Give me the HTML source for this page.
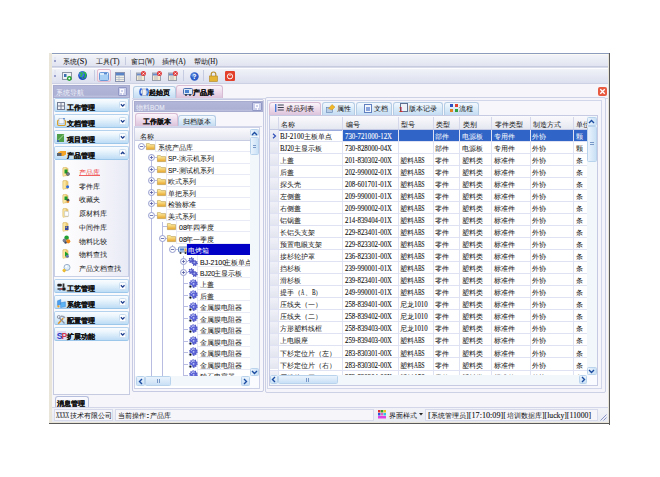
<!DOCTYPE html>
<html><head><meta charset="utf-8">
<style>
*{margin:0;padding:0;box-sizing:border-box}
html,body{width:660px;height:477px;overflow:hidden;background:#fff}
body{position:relative;font-family:"Liberation Sans",sans-serif;font-size:9.7px;color:#111;line-height:1}
.a{position:absolute}
.t{position:absolute;white-space:nowrap;font-size:9.7px;line-height:10px;color:#111}
.t b,.t i{font-weight:inherit;font-style:normal}
.c{position:relative;left:-0.7px;font-size:9.7px;letter-spacing:-1.17px;-webkit-text-stroke:0px currentColor}
.t[style*=bold] .c{-webkit-text-stroke:0.28px currentColor}
.l{display:inline-block;font-family:"Liberation Serif",serif;font-size:8.0px;white-space:nowrap}
.l>i{display:inline-block;transform-origin:0 0;-webkit-text-stroke:0.1px currentColor}
svg{overflow:visible}
body.cjk .c{font-size:6.83px;letter-spacing:0;-webkit-text-stroke:0;left:0}
body.cjk .t[style*=bold] .c{-webkit-text-stroke:0.15px currentColor}
</style></head><body>
<div class="a" style="left:49px;top:53px;width:3px;height:371px;background:#e9e5d8"></div>
<div class="a" style="left:52px;top:53px;width:557px;height:370px;background:#f6f6fa"></div>
<div class="a" style="left:52px;top:53px;width:557px;height:1px;background:#8c9cbc"></div>
<div class="a" style="left:52px;top:54px;width:556px;height:1px;background:#fbfbf4"></div>
<div class="a" style="left:608px;top:54px;width:1px;height:369px;background:#e9e5d8"></div>
<div class="a" style="left:609px;top:53px;width:1px;height:372px;background:#5a5a5a"></div>
<div class="a" style="left:52px;top:422px;width:557px;height:1px;background:#e9e5d8"></div>
<div class="a" style="left:49px;top:423px;width:561px;height:1px;background:#5a5a5a"></div>
<div class="a" style="left:52px;top:55px;width:556px;height:11px;background:linear-gradient(#f2f3f9,#e1e4f0)"></div>
<div class="a" style="left:52px;top:66px;width:556px;height:1px;background:#c6cbe0"></div>
<div class="a" style="left:54px;top:57px;width:2px;height:8px;background:#e4e6f2"></div>
<div class="a" style="left:54px;top:59.5px;width:2px;height:2px;background:#9aa2cc"></div>
<div class="t" style="left:63.3px;top:56.34px;"><b class="c">系统</b><i class="l" style="width:10.23px;"><i style="transform:scaleX(1.023)">(S)</i></i></div>
<div class="t" style="left:95.8px;top:56.34px;"><b class="c">工具</b><i class="l" style="width:10.23px;"><i style="transform:scaleX(0.930)">(T)</i></i></div>
<div class="t" style="left:131.4px;top:56.34px;"><b class="c">窗口</b><i class="l" style="width:10.23px;"><i style="transform:scaleX(0.731)">(W)</i></i></div>
<div class="t" style="left:162.4px;top:56.34px;"><b class="c">插件</b><i class="l" style="width:10.23px;"><i style="transform:scaleX(0.853)">(A)</i></i></div>
<div class="t" style="left:194.2px;top:56.34px;"><b class="c">帮助</b><i class="l" style="width:10.23px;"><i style="transform:scaleX(0.853)">(H)</i></i></div>
<div class="a" style="left:125px;top:56.5px;width:1px;height:8px;background:#c4cae0"></div>
<div class="a" style="left:52px;top:67px;width:556px;height:16px;background:linear-gradient(#f4f5fa,#dcdfee)"></div>
<div class="a" style="left:52px;top:67px;width:556px;height:1px;background:#d6dae9"></div>
<div class="a" style="left:52px;top:68px;width:556px;height:1px;background:#fdfdff"></div>
<div class="a" style="left:52px;top:83px;width:556px;height:1px;background:#cdd1e4"></div>
<div class="a" style="left:54px;top:70px;width:2px;height:11px;background:#e4e6f2"></div>
<div class="a" style="left:54px;top:75px;width:2px;height:2px;background:#9aa2cc"></div>
<div class="a" style="left:93.5px;top:70px;width:1px;height:11px;background:#c6cce2"></div>
<div class="a" style="left:130px;top:70px;width:1px;height:11px;background:#c6cce2"></div>
<div class="a" style="left:182.5px;top:70px;width:1px;height:11px;background:#c6cce2"></div>
<div class="a" style="left:203px;top:70px;width:1px;height:11px;background:#c6cce2"></div>
<div class="a" style="left:96.5px;top:69px;width:14.5px;height:13px;background:linear-gradient(#fdf5f9,#f2dfe9);border:1px solid #e4bcd0;border-radius:2px"></div>

<svg class="a" style="left:62px;top:72px" width="10" height="9" viewBox="0 0 10 9"><rect x="0.5" y="0.5" width="9" height="7" fill="#eef2f6" stroke="#8a94a4"/><rect x="2" y="2" width="2.5" height="3" fill="#3a70b0"/><circle cx="7.3" cy="6.5" r="2.4" fill="#24a030"/><circle cx="7.3" cy="6.5" r="1" fill="#fff"/></svg>
<svg class="a" style="left:78.3px;top:71.3px" width="9.2" height="9.2" viewBox="0 0 9.2 9.2"><circle cx="4.6" cy="4.6" r="4.4" fill="#1c4cc0"/><circle cx="3.6" cy="3.4" r="2.8" fill="#3a7ae0"/><path d="M1.6 2.4c1.2-.8 2.6-.6 2.4.8-.2 1.2-1.6 1.2-1.2 2.6M5.4 1.2c1.4.2 2.6 1.2 2.4 2.8-.2 1.2-1.2 1.6-.8 3" stroke="#30c040" stroke-width="1.4" fill="none"/><path d="M3.8 6.6l1.6.9" stroke="#40d050" stroke-width="1"/></svg>
<svg class="a" style="left:99px;top:71.5px" width="10" height="9" viewBox="0 0 10 9"><rect x="0.5" y="0.5" width="9" height="8" rx="1" fill="#a8d0f4" stroke="#6a9ad8"/><rect x="1" y="1" width="8" height="2" fill="#d8ecfc"/><rect x="5" y="1" width="3" height="1.5" fill="#5a8ad0"/></svg>
<svg class="a" style="left:115px;top:71.5px" width="10" height="10" viewBox="0 0 10 10"><rect x="0.5" y="0.5" width="9" height="9" fill="#f2f0e4" stroke="#8a94b0"/><rect x="1" y="1" width="8" height="2.5" fill="#5a84c8"/><path d="M1 5.5h8M1 7.5h8M4 4v5" stroke="#b4bccc" stroke-width="0.8"/></svg>

<svg class="a" style="left:135.5px;top:71px" width="10" height="10" viewBox="0 0 10 10"><rect x="0.5" y="2" width="8" height="7.5" fill="#f2ead2" stroke="#9aa0ac"/><rect x="1" y="2.5" width="7" height="2" fill="#6a8ccc"/><path d="M2 6h4M2 8h4" stroke="#a8aebb" stroke-width="0.8"/><circle cx="7.4" cy="2.6" r="2.5" fill="#e03a3a"/><path d="M6.4 1.6l2 2M8.4 1.6l-2 2" stroke="#fff" stroke-width="0.8"/></svg>
<svg class="a" style="left:152px;top:71px" width="10" height="10" viewBox="0 0 10 10"><rect x="0.5" y="2" width="8" height="7.5" fill="#f2ead2" stroke="#9aa0ac"/><rect x="1" y="2.5" width="7" height="2" fill="#6a8ccc"/><path d="M2 6h4M2 8h4" stroke="#a8aebb" stroke-width="0.8"/><circle cx="7.4" cy="2.6" r="2.5" fill="#e03a3a"/><path d="M6.4 1.6l2 2M8.4 1.6l-2 2" stroke="#fff" stroke-width="0.8"/></svg>
<svg class="a" style="left:168px;top:71px" width="10" height="10" viewBox="0 0 10 10"><rect x="0.5" y="2" width="8" height="7.5" fill="#f2ead2" stroke="#9aa0ac"/><rect x="1" y="2.5" width="7" height="2" fill="#6a8ccc"/><path d="M2 6h4M2 8h4" stroke="#a8aebb" stroke-width="0.8"/><circle cx="7.4" cy="2.6" r="2.5" fill="#e03a3a"/><path d="M6.4 1.6l2 2M8.4 1.6l-2 2" stroke="#fff" stroke-width="0.8"/></svg>

<svg class="a" style="left:189.5px;top:71.5px" width="9" height="9" viewBox="0 0 9 9"><circle cx="4.5" cy="4.5" r="4.2" fill="#2c5cc8"/><circle cx="3.6" cy="3.2" r="2.3" fill="#7aa6ec" opacity=".6"/><text x="4.5" y="7.4" font-size="7" font-family="Liberation Sans" font-weight="bold" fill="#fff" text-anchor="middle">?</text></svg>
<svg class="a" style="left:209px;top:70.5px" width="9" height="11" viewBox="0 0 9 11"><path d="M2.2 5V3.3a2.3 2.3 0 0 1 4.6 0V5" stroke="#b89030" stroke-width="1.2" fill="none"/><rect x=".5" y="5" width="8" height="5.5" fill="#e4b432" stroke="#b08424" stroke-width="0.6"/></svg>
<svg class="a" style="left:225px;top:71px" width="10" height="10" viewBox="0 0 10 10"><rect x="0" y="0" width="10" height="10" rx="1.2" fill="#e2402a"/><circle cx="5" cy="5.3" r="2.6" stroke="#fff" stroke-width="1" fill="none"/><path d="M5 1.5v3.5" stroke="#e2402a" stroke-width="1.8"/><path d="M5 2v3" stroke="#fff" stroke-width="0.9"/></svg>

<div class="a" style="left:133px;top:85.5px;width:42.5px;height:12.5px;background:linear-gradient(#f4f9fe,#dcecf9 45%,#c4dcf2);border:1px solid #b4cce4;border-bottom:none;border-radius:3px 3px 0 0"></div>
<div class="a" style="left:175.5px;top:84.5px;width:47px;height:13.5px;background:linear-gradient(#fbf6fb,#eedcec 45%,#dcc4dc);border:1px solid #d8bcd4;border-bottom:none;border-radius:3px 3px 0 0"></div>
<svg class="a" style="left:139px;top:87px" width="10" height="10" viewBox="0 0 10 10"><rect x="3.2" y="2" width="4" height="6.5" fill="#eef0f4" stroke="#8088a0" stroke-width=".5"/><path d="M2.6 1.5C.6 3 .4 6 2 8" stroke="#3a6ad8" stroke-width="1.6" fill="none"/><path d="M.6 7l1.8 2.2L3.4 6.6z" fill="#2a50c0"/><path d="M7.6 8.5c2-1.5 2.2-4.5.6-6.5" stroke="#3a7ae8" stroke-width="1.6" fill="none"/><path d="M9.6 3L7.8.8 6.8 3.4z" fill="#2a60d0"/></svg>
<div class="t" style="left:149.2px;top:86.94px;font-weight:bold"><b class="c">起始页</b></div>
<svg class="a" style="left:183px;top:88px" width="10" height="8" viewBox="0 0 10 8"><rect x="0.5" y="0.5" width="9" height="6" rx="1" fill="#dce8f4" stroke="#4a70b0"/><rect x="2" y="2" width="4" height="3" fill="#4a80d0"/><circle cx="3" cy="7" r="1" fill="#333"/><circle cx="7" cy="7" r="1" fill="#333"/></svg>
<div class="t" style="left:192.5px;top:86.94px;font-weight:bold"><b class="c">产品库</b></div>
<svg class="a" style="left:598px;top:86.5px" width="9" height="9" viewBox="0 0 9 9"><rect x="0" y="0" width="9" height="9" rx="2" fill="#e85a40"/><path d="M2.3 2.3l4.4 4.4M6.7 2.3l-4.4 4.4" stroke="#fff" stroke-width="1.3"/></svg>
<div class="a" style="left:132px;top:98px;width:476px;height:1px;background:#d6d9ea"></div>
<div class="a" style="left:53px;top:84.5px;width:76.5px;height:310px;background:#fafafd;border:1px solid #c6cbe2"></div>
<div class="a" style="left:53px;top:84.5px;width:76.5px;height:13px;background:linear-gradient(#b2b6d8,#acb0d3 80%,#c0c4e0);border:1px solid #a8adcf"></div>
<div class="t" style="left:55.9px;top:87.24px;color:#f0f1fa"><b class="c">系统导航</b></div>
<div class="a" style="left:117.6px;top:87.3px;width:9.4px;height:9px;background:#ccd0ea;border:1px solid #9298c6;border-radius:1px"></div>
<div class="a" style="left:120.2px;top:89.3px;width:4.2px;height:4px;border:1px solid #fafaff"></div>
<div class="a" style="left:121.8px;top:93px;width:1px;height:2px;background:#fafaff"></div>
<div class="a" style="left:53.5px;top:98.3px;width:75.5px;height:13.3px;background:linear-gradient(#f9fcff 0%,#edf6fd 30%,#d2e8f9 70%,#bddcf5 100%);border:1px solid #b4d2ee;border-bottom-color:#9cc6ea;border-radius:2px"></div>
<svg class="a" style="left:56.5px;top:101.5px" width="8" height="8" viewBox="0 0 8 8"><rect x=".5" y=".5" width="7" height="7" fill="#eef0f4" stroke="#747e94"/><path d="M4 .5v7M.5 4h7" stroke="#747e94"/></svg>
<div class="t" style="left:67px;top:101.54px;font-weight:bold"><b class="c">工作管理</b></div>
<svg class="a" style="left:118.6px;top:101.2px" width="7.4" height="8.2" viewBox="0 0 7.4 8.2"><rect x=".5" y=".5" width="6.4" height="7.2" rx="1.2" fill="#fbfdff" stroke="#c8dcf0"/><path d="M1.9 3.3l1.8 1.8 1.8-1.8" stroke="#1a3c8c" stroke-width="1.3" fill="none"/></svg>
<div class="a" style="left:53.5px;top:114.3px;width:75.5px;height:13.3px;background:linear-gradient(#f9fcff 0%,#edf6fd 30%,#d2e8f9 70%,#bddcf5 100%);border:1px solid #b4d2ee;border-bottom-color:#9cc6ea;border-radius:2px"></div>
<svg class="a" style="left:56.5px;top:117.5px" width="9" height="8" viewBox="0 0 9 8"><rect x=".6" y="2" width="7.8" height="5.5" rx="1.2" fill="none" stroke="#d8a028" stroke-width="1.2"/><rect x="2" y=".3" width="5" height="5.5" fill="#f4f8fc" stroke="#98a8c4" stroke-width=".5"/><circle cx="7" cy=".8" r=".8" fill="#3070d0"/></svg>
<div class="t" style="left:67px;top:117.54px;font-weight:bold"><b class="c">文档管理</b></div>
<svg class="a" style="left:118.6px;top:117.2px" width="7.4" height="8.2" viewBox="0 0 7.4 8.2"><rect x=".5" y=".5" width="6.4" height="7.2" rx="1.2" fill="#fbfdff" stroke="#c8dcf0"/><path d="M1.9 3.3l1.8 1.8 1.8-1.8" stroke="#1a3c8c" stroke-width="1.3" fill="none"/></svg>
<div class="a" style="left:53.5px;top:130.3px;width:75.5px;height:13.3px;background:linear-gradient(#f9fcff 0%,#edf6fd 30%,#d2e8f9 70%,#bddcf5 100%);border:1px solid #b4d2ee;border-bottom-color:#9cc6ea;border-radius:2px"></div>
<svg class="a" style="left:56.5px;top:133.5px" width="8" height="8" viewBox="0 0 8 8"><rect x="0" y="0" width="7" height="8" fill="#4e9e4a"/><path d="M0 7.5l7-7" stroke="#a8d898" stroke-width="1"/><circle cx="1" cy="7" r="1" fill="#3050c0"/></svg>
<div class="t" style="left:67px;top:133.54px;font-weight:bold"><b class="c">项目管理</b></div>
<svg class="a" style="left:118.6px;top:133.2px" width="7.4" height="8.2" viewBox="0 0 7.4 8.2"><rect x=".5" y=".5" width="6.4" height="7.2" rx="1.2" fill="#fbfdff" stroke="#c8dcf0"/><path d="M1.9 3.3l1.8 1.8 1.8-1.8" stroke="#1a3c8c" stroke-width="1.3" fill="none"/></svg>
<div class="a" style="left:53.5px;top:146.3px;width:75.5px;height:13.3px;background:linear-gradient(#f9fcff 0%,#edf6fd 30%,#d2e8f9 70%,#bddcf5 100%);border:1px solid #b4d2ee;border-bottom-color:#9cc6ea;border-radius:2px"></div>
<svg class="a" style="left:56.5px;top:149.5px" width="9" height="7" viewBox="0 0 9 7"><path d="M1 2.5l2.5-1.5h5.5v3.5l-2.5 1.5H1z" fill="#f4a428"/><rect x="0" y="3" width="4.5" height="3" fill="#5a6270"/></svg>
<div class="t" style="left:67px;top:149.54px;font-weight:bold"><b class="c">产品管理</b></div>
<svg class="a" style="left:118.6px;top:149.2px" width="7.4" height="8.2" viewBox="0 0 7.4 8.2"><rect x=".5" y=".5" width="6.4" height="7.2" rx="1.2" fill="#fbfdff" stroke="#c8dcf0"/><path d="M1.9 5l1.8-1.8L5.5 5" stroke="#1a3c8c" stroke-width="1.3" fill="none"/></svg>
<div class="a" style="left:53.5px;top:160px;width:75.5px;height:117px;background:linear-gradient(90deg,#ffffff,#f6f6fb 55%,#e8eaf5);border:1px solid #c8d0e8;border-top:none"></div>
<svg class="a" style="left:62px;top:166.7px" width="9" height="10" viewBox="0 0 9 10"><path d="M1 .8h4.2l.8 1v6.8H1z" fill="#f2d27a" stroke="#c9a24a" stroke-width=".5"/><path d="M1 1.2l3-.9v8.2l-3 .9z" fill="#fbe7a0" stroke="#d8b560" stroke-width=".4"/><rect x="2.5" y="2.5" width="3" height="4" fill="#1e9a2a"/><circle cx="6" cy="7" r="1.8" fill="#404858"/><circle cx="6" cy="7" r=".7" fill="#c8ccd8"/></svg>
<div class="t" style="left:79px;top:167.04px;color:#f03838"><b class="c">产品库</b></div>
<div class="a" style="left:79px;top:174.9px;width:20.5px;height:0.8px;background:#f06060"></div>
<svg class="a" style="left:62px;top:180.4px" width="9" height="10" viewBox="0 0 9 10"><path d="M1 .8h4.2l.8 1v6.8H1z" fill="#f2d27a" stroke="#c9a24a" stroke-width=".5"/><path d="M1 1.2l3-.9v8.2l-3 .9z" fill="#fbe7a0" stroke="#d8b560" stroke-width=".4"/><circle cx="5.6" cy="6.8" r="1.5" fill="#2a6ae0"/></svg>
<div class="t" style="left:79px;top:180.74px;"><b class="c">零件库</b></div>
<svg class="a" style="left:62px;top:194.1px" width="9" height="10" viewBox="0 0 9 10"><path d="M1 .8h4.2l.8 1v6.8H1z" fill="#f2d27a" stroke="#c9a24a" stroke-width=".5"/><path d="M1 1.2l3-.9v8.2l-3 .9z" fill="#fbe7a0" stroke="#d8b560" stroke-width=".4"/><rect x="2.5" y="2.5" width="3" height="3.5" fill="#1e9a2a"/><circle cx="6" cy="6.2" r="1.4" fill="#404858"/><path d="M4.6 7.2l1 .3.5-1 .5 1 1-.2-.7.8.3 1-1-.5-1 .5.3-1z" fill="#f07a10"/></svg>
<div class="t" style="left:79px;top:194.44px;"><b class="c">收藏夹</b></div>
<svg class="a" style="left:62px;top:207.8px" width="9" height="10" viewBox="0 0 9 10"><path d="M1 .8h4.2l.8 1v6.8H1z" fill="#f2d27a" stroke="#c9a24a" stroke-width=".5"/><path d="M1 1.2l3-.9v8.2l-3 .9z" fill="#fbe7a0" stroke="#d8b560" stroke-width=".4"/><path d="M2.6 3.2h3l1 1v4h-4z" fill="#fdfdfd" stroke="#a0a8b8" stroke-width=".4"/></svg>
<div class="t" style="left:79px;top:208.14px;"><b class="c">原材料库</b></div>
<svg class="a" style="left:62px;top:221.5px" width="9" height="10" viewBox="0 0 9 10"><path d="M1 .8h4.2l.8 1v6.8H1z" fill="#f2d27a" stroke="#c9a24a" stroke-width=".5"/><path d="M1 1.2l3-.9v8.2l-3 .9z" fill="#fbe7a0" stroke="#d8b560" stroke-width=".4"/><rect x="3" y="4" width="3.5" height="4" fill="#3848a0"/><rect x="3.6" y="4.6" width="1.2" height="1.2" fill="#f0d040"/></svg>
<div class="t" style="left:79px;top:221.84px;"><b class="c">中间件库</b></div>
<svg class="a" style="left:62px;top:235.2px" width="9" height="10" viewBox="0 0 9 10"><circle cx="4.6" cy="2.8" r="2.3" fill="#20a030"/><circle cx="2.6" cy="5.6" r="2" fill="#7a8090"/><circle cx="6.2" cy="6.3" r="2.1" fill="#f08a18"/><circle cx="3.6" cy="7.6" r="1.2" fill="#404a60"/></svg>
<div class="t" style="left:79px;top:235.54px;"><b class="c">物料比较</b></div>
<svg class="a" style="left:62px;top:248.9px" width="9" height="10" viewBox="0 0 9 10"><path d="M1 .8h4.2l.8 1v6.8H1z" fill="#f2d27a" stroke="#c9a24a" stroke-width=".5"/><path d="M1 1.2l3-.9v8.2l-3 .9z" fill="#fbe7a0" stroke="#d8b560" stroke-width=".4"/><path d="M3 2.6l3.8 2.6L3 7.8z" fill="#18a028"/><circle cx="5.4" cy="7.3" r="1.5" fill="#6078b0"/></svg>
<div class="t" style="left:79px;top:249.24px;"><b class="c">物料查找</b></div>
<svg class="a" style="left:62px;top:262.6px" width="9" height="10" viewBox="0 0 9 10"><path d="M1.5 8.8l2.5-2.5" stroke="#d8a030" stroke-width="2"/><circle cx="5" cy="4.4" r="3" fill="#dff0fb" stroke="#9ab0c8" stroke-width="1"/><circle cx="4.2" cy="3.6" r="1" fill="#fff"/><circle cx="2" cy="7.2" r="1.5" fill="#f0c030"/></svg>
<div class="t" style="left:79px;top:262.94px;"><b class="c">产品文档查找</b></div>
<div class="a" style="left:53.5px;top:279.3px;width:75.5px;height:13.3px;background:linear-gradient(#f9fcff 0%,#edf6fd 30%,#d2e8f9 70%,#bddcf5 100%);border:1px solid #b4d2ee;border-bottom-color:#9cc6ea;border-radius:2px"></div>
<svg class="a" style="left:56.5px;top:282.5px" width="9" height="8" viewBox="0 0 9 8"><rect x=".3" y=".8" width="4.5" height="2.6" rx="1" fill="#202020"/><rect x="5.6" y=".5" width="1.8" height="4" fill="#303030"/><path d="M.5 5.2h3.8l1.3 1.6H.5z" fill="#383838"/><rect x="5.2" y="4.6" width="3.4" height="3" rx=".8" fill="#181818"/><circle cx="4.4" cy="5.8" r=".9" fill="#d04040"/><circle cx="3" cy="7.2" r=".7" fill="#4a80d0"/></svg>
<div class="t" style="left:67px;top:282.54px;font-weight:bold"><b class="c">工艺管理</b></div>
<svg class="a" style="left:118.6px;top:282.2px" width="7.4" height="8.2" viewBox="0 0 7.4 8.2"><rect x=".5" y=".5" width="6.4" height="7.2" rx="1.2" fill="#fbfdff" stroke="#c8dcf0"/><path d="M1.9 3.3l1.8 1.8 1.8-1.8" stroke="#1a3c8c" stroke-width="1.3" fill="none"/></svg>
<div class="a" style="left:53.5px;top:295.3px;width:75.5px;height:13.3px;background:linear-gradient(#f9fcff 0%,#edf6fd 30%,#d2e8f9 70%,#bddcf5 100%);border:1px solid #b4d2ee;border-bottom-color:#9cc6ea;border-radius:2px"></div>
<svg class="a" style="left:56.5px;top:298.5px" width="9" height="9" viewBox="0 0 9 9"><path d="M.5 1.8L3.8.5v4.8L.5 6.6z" fill="#4aa0ee" stroke="#2a70c0" stroke-width=".4"/><path d="M3.6 3.8l4.8-1v4.8l-4.8 1z" fill="#5cb4f4" stroke="#2a70c0" stroke-width=".4"/><circle cx="1.4" cy="7.4" r="1.1" fill="#f0a020"/></svg>
<div class="t" style="left:67px;top:298.54px;font-weight:bold"><b class="c">系统管理</b></div>
<svg class="a" style="left:118.6px;top:298.2px" width="7.4" height="8.2" viewBox="0 0 7.4 8.2"><rect x=".5" y=".5" width="6.4" height="7.2" rx="1.2" fill="#fbfdff" stroke="#c8dcf0"/><path d="M1.9 3.3l1.8 1.8 1.8-1.8" stroke="#1a3c8c" stroke-width="1.3" fill="none"/></svg>
<div class="a" style="left:53.5px;top:311.3px;width:75.5px;height:13.3px;background:linear-gradient(#f9fcff 0%,#edf6fd 30%,#d2e8f9 70%,#bddcf5 100%);border:1px solid #b4d2ee;border-bottom-color:#9cc6ea;border-radius:2px"></div>
<svg class="a" style="left:56.5px;top:314.5px" width="9" height="10" viewBox="0 0 9 10"><path d="M1.2 8.8L6.2 3.2" stroke="#e09428" stroke-width="1.6"/><path d="M2 2.5L7.5 8.5" stroke="#8a90a0" stroke-width="1.2"/><path d="M3.5 .8c2-.8 4.2.2 5 2l-1.6.6C6 2.2 5 1.8 3.8 2.2z" fill="#9aa0b0"/><circle cx="1.8" cy="2" r="1.5" fill="none" stroke="#8a90a0" stroke-width=".9"/></svg>
<div class="t" style="left:67px;top:314.54px;font-weight:bold"><b class="c">配置管理</b></div>
<svg class="a" style="left:118.6px;top:314.2px" width="7.4" height="8.2" viewBox="0 0 7.4 8.2"><rect x=".5" y=".5" width="6.4" height="7.2" rx="1.2" fill="#fbfdff" stroke="#c8dcf0"/><path d="M1.9 3.3l1.8 1.8 1.8-1.8" stroke="#1a3c8c" stroke-width="1.3" fill="none"/></svg>
<div class="a" style="left:53.5px;top:327.3px;width:75.5px;height:13.3px;background:linear-gradient(#f9fcff 0%,#edf6fd 30%,#d2e8f9 70%,#bddcf5 100%);border:1px solid #b4d2ee;border-bottom-color:#9cc6ea;border-radius:2px"></div>
<svg class="a" style="left:56.5px;top:330.5px" width="9" height="9" viewBox="0 0 9 9"><rect x="0" y="0" width="9" height="9" fill="#dcdcf4"/><text x="-.2" y="8.2" font-size="8.6" font-family="Liberation Sans" font-weight="bold" fill="#2838c8">S</text><text x="4.4" y="8.2" font-size="8.6" font-family="Liberation Sans" font-weight="bold" fill="#d03850">P</text></svg>
<div class="t" style="left:67px;top:330.54px;font-weight:bold"><b class="c">扩展功能</b></div>
<svg class="a" style="left:118.6px;top:330.2px" width="7.4" height="8.2" viewBox="0 0 7.4 8.2"><rect x=".5" y=".5" width="6.4" height="7.2" rx="1.2" fill="#fbfdff" stroke="#c8dcf0"/><path d="M1.9 3.3l1.8 1.8 1.8-1.8" stroke="#1a3c8c" stroke-width="1.3" fill="none"/></svg>
<div class="a" style="left:131.5px;top:99px;width:132.5px;height:292.5px;background:#f6f6fb;border:1px solid #c6cae2;border-radius:2px"></div>
<div class="a" style="left:133.5px;top:101px;width:129px;height:11px;background:linear-gradient(#b2b6d8,#acb0d3 80%,#c0c4e0);border:1px solid #a8adcf"></div>
<div class="t" style="left:135.5px;top:101.84px;color:#eceef8"><b class="c">物料</b><i class="l" style="width:14.4px;font-family:'Liberation Sans';"><i style="transform:scaleX(0.800)">BOM</i></i></div>
<div class="a" style="left:252.3px;top:102.3px;width:9.4px;height:9px;background:#ccd0ea;border:1px solid #9298c6;border-radius:1px"></div>
<div class="a" style="left:254.9px;top:104.3px;width:4.2px;height:4px;border:1px solid #fafaff"></div>
<div class="a" style="left:256.5px;top:108px;width:1px;height:2px;background:#fafaff"></div>
<div class="a" style="left:135px;top:113.3px;width:42.5px;height:13px;background:linear-gradient(#fbf6fb,#eedcec 45%,#dcc4dc);border:1px solid #d8bcd4;border-bottom:none;border-radius:3px 3px 0 0"></div>
<div class="a" style="left:177.5px;top:114.8px;width:38.5px;height:11.5px;background:linear-gradient(#f4f9fe,#dcecf9 45%,#c4dcf2);border:1px solid #b4cce4;border-bottom:none;border-radius:3px 3px 0 0"></div>
<div class="t" style="left:142.9px;top:115.84px;font-weight:bold"><b class="c">工作版本</b></div>
<div class="t" style="left:182.5px;top:115.94px;"><b class="c">归档版本</b></div>
<div class="a" style="left:133.5px;top:126.3px;width:128px;height:1px;background:#d2d6e8"></div>
<div class="a" style="left:134.2px;top:126.5px;width:125.5px;height:262px;background:#fff;border:1px solid #cdd1e7"></div>
<div class="a" style="left:135.2px;top:127.5px;width:114.8px;height:12.5px;background:linear-gradient(#fafafd,#e4e6f0)"></div>
<div class="a" style="left:135.2px;top:139.5px;width:114.8px;height:1px;background:#c8cce2"></div>
<div class="t" style="left:139.5px;top:130.84px;"><b class="c">名称</b></div>
<div class="a" style="left:135.2px;top:140.5px;width:114.8px;height:235.5px;overflow:hidden">
<div class="a" style="left:16px;top:13.45px;width:1px;height:61.25px;background:#b8bce0"></div>
<div class="a" style="left:16px;top:77.7px;width:1px;height:181.8px;background:#b8bce0"></div>
<div class="a" style="left:26.5px;top:81.15px;width:1px;height:178.35px;background:#b8bce0"></div>
<div class="a" style="left:47.5px;top:115.5px;width:1px;height:144px;background:#b8bce0"></div>
<div class="a" style="left:37px;top:104.05px;width:1px;height:5px;background:#b8bce0"></div>
<div class="a" style="left:20px;top:0.3px;width:1px;height:11.45px;background:#e8eaf5"></div>
<div class="a" style="left:20px;top:10.75px;width:300px;height:1px;background:#e8eaf5"></div>
<div class="a" style="left:9px;top:5.5px;width:2.3px;height:1px;background:#b8bce0"></div>
<svg class="a" style="left:2.5px;top:2.5px" width="7" height="7" viewBox="0 0 7 7"><circle cx="3.5" cy="3.5" r="3" fill="#fff" stroke="#8a92c8" stroke-width=".9"/><path d="M1.8 3.5h3.4" stroke="#5058a0" stroke-width=".8"/></svg>
<svg class="a" style="left:11.3px;top:2.7px" width="9" height="7" viewBox="0 0 9 7"><defs><linearGradient id="fg" x1="0" y1="0" x2="0" y2="1"><stop offset="0" stop-color="#fff4b0"/><stop offset="1" stop-color="#e8a428"/></linearGradient></defs><path d="M.4 .6h3l.8 1h4.4v5H.4z" fill="url(#fg)" stroke="#a88838" stroke-width=".5"/></svg>
<div class="t" style="left:22.5px;top:1.54px;"><b class="c">系统产品库</b></div>
<div class="a" style="left:30.5px;top:11.75px;width:1px;height:11.45px;background:#e8eaf5"></div>
<div class="a" style="left:30.5px;top:22.2px;width:300px;height:1px;background:#e8eaf5"></div>
<div class="a" style="left:19.5px;top:16.95px;width:2.3px;height:1px;background:#b8bce0"></div>
<svg class="a" style="left:13px;top:13.95px" width="7" height="7" viewBox="0 0 7 7"><circle cx="3.5" cy="3.5" r="3" fill="#fff" stroke="#8a92c8" stroke-width=".9"/><path d="M1.8 3.5h3.4M3.5 1.8v3.4" stroke="#5058a0" stroke-width=".8"/></svg>
<svg class="a" style="left:21.8px;top:14.15px" width="9" height="7" viewBox="0 0 9 7"><defs><linearGradient id="fg" x1="0" y1="0" x2="0" y2="1"><stop offset="0" stop-color="#fff4b0"/><stop offset="1" stop-color="#e8a428"/></linearGradient></defs><path d="M.4 .6h3l.8 1h4.4v5H.4z" fill="url(#fg)" stroke="#a88838" stroke-width=".5"/></svg>
<div class="t" style="left:33px;top:12.99px;"><i class="l" style="width:10.5px;font-family:'Liberation Sans';"><i style="transform:scaleX(0.808)">SP-</i></i><b class="c">演示机系列</b></div>
<div class="a" style="left:30.5px;top:23.2px;width:1px;height:11.45px;background:#e8eaf5"></div>
<div class="a" style="left:30.5px;top:33.65px;width:300px;height:1px;background:#e8eaf5"></div>
<div class="a" style="left:19.5px;top:28.4px;width:2.3px;height:1px;background:#b8bce0"></div>
<svg class="a" style="left:13px;top:25.4px" width="7" height="7" viewBox="0 0 7 7"><circle cx="3.5" cy="3.5" r="3" fill="#fff" stroke="#8a92c8" stroke-width=".9"/><path d="M1.8 3.5h3.4M3.5 1.8v3.4" stroke="#5058a0" stroke-width=".8"/></svg>
<svg class="a" style="left:21.8px;top:25.6px" width="9" height="7" viewBox="0 0 9 7"><defs><linearGradient id="fg" x1="0" y1="0" x2="0" y2="1"><stop offset="0" stop-color="#fff4b0"/><stop offset="1" stop-color="#e8a428"/></linearGradient></defs><path d="M.4 .6h3l.8 1h4.4v5H.4z" fill="url(#fg)" stroke="#a88838" stroke-width=".5"/></svg>
<div class="t" style="left:33px;top:24.44px;"><i class="l" style="width:10.5px;font-family:'Liberation Sans';"><i style="transform:scaleX(0.808)">SP-</i></i><b class="c">测试机系列</b></div>
<div class="a" style="left:30.5px;top:34.65px;width:1px;height:11.45px;background:#e8eaf5"></div>
<div class="a" style="left:30.5px;top:45.1px;width:300px;height:1px;background:#e8eaf5"></div>
<div class="a" style="left:19.5px;top:39.85px;width:2.3px;height:1px;background:#b8bce0"></div>
<svg class="a" style="left:13px;top:36.85px" width="7" height="7" viewBox="0 0 7 7"><circle cx="3.5" cy="3.5" r="3" fill="#fff" stroke="#8a92c8" stroke-width=".9"/><path d="M1.8 3.5h3.4M3.5 1.8v3.4" stroke="#5058a0" stroke-width=".8"/></svg>
<svg class="a" style="left:21.8px;top:37.05px" width="9" height="7" viewBox="0 0 9 7"><defs><linearGradient id="fg" x1="0" y1="0" x2="0" y2="1"><stop offset="0" stop-color="#fff4b0"/><stop offset="1" stop-color="#e8a428"/></linearGradient></defs><path d="M.4 .6h3l.8 1h4.4v5H.4z" fill="url(#fg)" stroke="#a88838" stroke-width=".5"/></svg>
<div class="t" style="left:33px;top:35.89px;"><b class="c">欧式系列</b></div>
<div class="a" style="left:30.5px;top:46.1px;width:1px;height:11.45px;background:#e8eaf5"></div>
<div class="a" style="left:30.5px;top:56.55px;width:300px;height:1px;background:#e8eaf5"></div>
<div class="a" style="left:19.5px;top:51.3px;width:2.3px;height:1px;background:#b8bce0"></div>
<svg class="a" style="left:13px;top:48.3px" width="7" height="7" viewBox="0 0 7 7"><circle cx="3.5" cy="3.5" r="3" fill="#fff" stroke="#8a92c8" stroke-width=".9"/><path d="M1.8 3.5h3.4M3.5 1.8v3.4" stroke="#5058a0" stroke-width=".8"/></svg>
<svg class="a" style="left:21.8px;top:48.5px" width="9" height="7" viewBox="0 0 9 7"><defs><linearGradient id="fg" x1="0" y1="0" x2="0" y2="1"><stop offset="0" stop-color="#fff4b0"/><stop offset="1" stop-color="#e8a428"/></linearGradient></defs><path d="M.4 .6h3l.8 1h4.4v5H.4z" fill="url(#fg)" stroke="#a88838" stroke-width=".5"/></svg>
<div class="t" style="left:33px;top:47.34px;"><b class="c">单把系列</b></div>
<div class="a" style="left:30.5px;top:57.55px;width:1px;height:11.45px;background:#e8eaf5"></div>
<div class="a" style="left:30.5px;top:68px;width:300px;height:1px;background:#e8eaf5"></div>
<div class="a" style="left:19.5px;top:62.75px;width:2.3px;height:1px;background:#b8bce0"></div>
<svg class="a" style="left:13px;top:59.75px" width="7" height="7" viewBox="0 0 7 7"><circle cx="3.5" cy="3.5" r="3" fill="#fff" stroke="#8a92c8" stroke-width=".9"/><path d="M1.8 3.5h3.4M3.5 1.8v3.4" stroke="#5058a0" stroke-width=".8"/></svg>
<svg class="a" style="left:21.8px;top:59.95px" width="9" height="7" viewBox="0 0 9 7"><defs><linearGradient id="fg" x1="0" y1="0" x2="0" y2="1"><stop offset="0" stop-color="#fff4b0"/><stop offset="1" stop-color="#e8a428"/></linearGradient></defs><path d="M.4 .6h3l.8 1h4.4v5H.4z" fill="url(#fg)" stroke="#a88838" stroke-width=".5"/></svg>
<div class="t" style="left:33px;top:58.79px;"><b class="c">检验标准</b></div>
<div class="a" style="left:30.5px;top:69px;width:1px;height:11.45px;background:#e8eaf5"></div>
<div class="a" style="left:30.5px;top:79.45px;width:300px;height:1px;background:#e8eaf5"></div>
<div class="a" style="left:19.5px;top:74.2px;width:2.3px;height:1px;background:#b8bce0"></div>
<svg class="a" style="left:13px;top:71.2px" width="7" height="7" viewBox="0 0 7 7"><circle cx="3.5" cy="3.5" r="3" fill="#fff" stroke="#8a92c8" stroke-width=".9"/><path d="M1.8 3.5h3.4" stroke="#5058a0" stroke-width=".8"/></svg>
<svg class="a" style="left:21.8px;top:71.4px" width="9" height="7" viewBox="0 0 9 7"><defs><linearGradient id="fg" x1="0" y1="0" x2="0" y2="1"><stop offset="0" stop-color="#fff4b0"/><stop offset="1" stop-color="#e8a428"/></linearGradient></defs><path d="M.4 .6h3l.8 1h4.4v5H.4z" fill="url(#fg)" stroke="#a88838" stroke-width=".5"/></svg>
<div class="t" style="left:33px;top:70.24px;"><b class="c">美式系列</b></div>
<div class="a" style="left:41px;top:80.45px;width:1px;height:11.45px;background:#e8eaf5"></div>
<div class="a" style="left:41px;top:90.9px;width:300px;height:1px;background:#e8eaf5"></div>
<div class="a" style="left:27px;top:85.65px;width:5.3px;height:1px;background:#b8bce0"></div>
<svg class="a" style="left:32.3px;top:82.85px" width="9" height="7" viewBox="0 0 9 7"><defs><linearGradient id="fg" x1="0" y1="0" x2="0" y2="1"><stop offset="0" stop-color="#fff4b0"/><stop offset="1" stop-color="#e8a428"/></linearGradient></defs><path d="M.4 .6h3l.8 1h4.4v5H.4z" fill="url(#fg)" stroke="#a88838" stroke-width=".5"/></svg>
<div class="t" style="left:43.5px;top:81.69px;"><i class="l" style="width:7px;font-family:'Liberation Sans';"><i style="transform:scaleX(0.875)">08</i></i><b class="c">年四季度</b></div>
<div class="a" style="left:41px;top:91.9px;width:1px;height:11.45px;background:#e8eaf5"></div>
<div class="a" style="left:41px;top:102.35px;width:300px;height:1px;background:#e8eaf5"></div>
<div class="a" style="left:30px;top:97.1px;width:2.3px;height:1px;background:#b8bce0"></div>
<svg class="a" style="left:23.5px;top:94.1px" width="7" height="7" viewBox="0 0 7 7"><circle cx="3.5" cy="3.5" r="3" fill="#fff" stroke="#8a92c8" stroke-width=".9"/><path d="M1.8 3.5h3.4" stroke="#5058a0" stroke-width=".8"/></svg>
<svg class="a" style="left:32.3px;top:94.3px" width="9" height="7" viewBox="0 0 9 7"><defs><linearGradient id="fg" x1="0" y1="0" x2="0" y2="1"><stop offset="0" stop-color="#fff4b0"/><stop offset="1" stop-color="#e8a428"/></linearGradient></defs><path d="M.4 .6h3l.8 1h4.4v5H.4z" fill="url(#fg)" stroke="#a88838" stroke-width=".5"/></svg>
<div class="t" style="left:43.5px;top:93.14px;"><i class="l" style="width:7px;font-family:'Liberation Sans';"><i style="transform:scaleX(0.875)">08</i></i><b class="c">年一季度</b></div>
<div class="a" style="left:50.8px;top:103.35px;width:1px;height:11.45px;background:#e8eaf5"></div>
<div class="a" style="left:50.8px;top:113.8px;width:300px;height:1px;background:#e8eaf5"></div>
<div class="a" style="left:40.5px;top:108.55px;width:2.3px;height:1px;background:#b8bce0"></div>
<svg class="a" style="left:34px;top:105.55px" width="7" height="7" viewBox="0 0 7 7"><circle cx="3.5" cy="3.5" r="3" fill="#fff" stroke="#8a92c8" stroke-width=".9"/><path d="M1.8 3.5h3.4" stroke="#5058a0" stroke-width=".8"/></svg>
<svg class="a" style="left:42.8px;top:105.05px" width="10" height="8" viewBox="0 0 10 8"><rect x=".5" y="1" width="9" height="5" rx="1" fill="#d8e4f4" stroke="#4a70b0" stroke-width=".8"/><rect x="2" y="2.5" width="4" height="2" fill="#4a80d0"/><rect x="6.5" y="2.5" width="2" height="3" fill="#e0a040"/><circle cx="2.5" cy="7" r="1" fill="#333"/><circle cx="7.5" cy="7" r="1" fill="#333"/></svg>
<div class="a" style="left:51.8px;top:103.75px;width:70px;height:11px;background:#0000c6"></div>
<div class="t" style="left:53.3px;top:104.59px;color:#fff"><b class="c">电烤箱</b></div>
<div class="a" style="left:62px;top:114.8px;width:1px;height:11.45px;background:#e8eaf5"></div>
<div class="a" style="left:62px;top:125.25px;width:300px;height:1px;background:#e8eaf5"></div>
<div class="a" style="left:51px;top:120px;width:2.3px;height:1px;background:#b8bce0"></div>
<svg class="a" style="left:44.5px;top:117px" width="7" height="7" viewBox="0 0 7 7"><circle cx="3.5" cy="3.5" r="3" fill="#fff" stroke="#8a92c8" stroke-width=".9"/><path d="M1.8 3.5h3.4M3.5 1.8v3.4" stroke="#5058a0" stroke-width=".8"/></svg>
<svg class="a" style="left:53.3px;top:116.2px" width="10" height="9" viewBox="0 0 10 9"><circle cx="3.3" cy="3.2" r="2.3" fill="#5a60cc" stroke="#4a50c0" stroke-width="1.4" stroke-dasharray="1 .9"/><circle cx="6.8" cy="6" r="2.3" fill="#5a60cc" stroke="#4a50c0" stroke-width="1.4" stroke-dasharray="1 .9"/><circle cx="2.8" cy="2.6" r=".9" fill="#a8b0f0"/><circle cx="6.3" cy="5.4" r=".9" fill="#a8b0f0"/></svg>
<div class="t" style="left:64.5px;top:116.04px;"><i class="l" style="width:24.5px;font-family:'Liberation Sans';"><i style="transform:scaleX(0.875)">BJ-2100</i></i><b class="c">主板单点</b></div>
<div class="a" style="left:62px;top:126.25px;width:1px;height:11.45px;background:#e8eaf5"></div>
<div class="a" style="left:62px;top:136.7px;width:300px;height:1px;background:#e8eaf5"></div>
<div class="a" style="left:51px;top:131.45px;width:2.3px;height:1px;background:#b8bce0"></div>
<svg class="a" style="left:44.5px;top:128.45px" width="7" height="7" viewBox="0 0 7 7"><circle cx="3.5" cy="3.5" r="3" fill="#fff" stroke="#8a92c8" stroke-width=".9"/><path d="M1.8 3.5h3.4M3.5 1.8v3.4" stroke="#5058a0" stroke-width=".8"/></svg>
<svg class="a" style="left:53.3px;top:127.65px" width="10" height="9" viewBox="0 0 10 9"><circle cx="3.3" cy="3.2" r="2.3" fill="#5a60cc" stroke="#4a50c0" stroke-width="1.4" stroke-dasharray="1 .9"/><circle cx="6.8" cy="6" r="2.3" fill="#5a60cc" stroke="#4a50c0" stroke-width="1.4" stroke-dasharray="1 .9"/><circle cx="2.8" cy="2.6" r=".9" fill="#a8b0f0"/><circle cx="6.3" cy="5.4" r=".9" fill="#a8b0f0"/></svg>
<div class="t" style="left:64.5px;top:127.49px;"><i class="l" style="width:14px;font-family:'Liberation Sans';"><i style="transform:scaleX(0.824)">BJ20</i></i><b class="c">主显示板</b></div>
<div class="a" style="left:62px;top:137.7px;width:1px;height:11.45px;background:#e8eaf5"></div>
<div class="a" style="left:62px;top:148.15px;width:300px;height:1px;background:#e8eaf5"></div>
<div class="a" style="left:48px;top:142.9px;width:5.3px;height:1px;background:#b8bce0"></div>
<svg class="a" style="left:52.5px;top:138.1px" width="10" height="10" viewBox="0 0 10 10"><circle cx="5.4" cy="4.6" r="3.4" fill="#5c64d6" stroke="#4c54c8" stroke-width="1.8" stroke-dasharray="1.2 .9"/><path d="M3.4 3.6a2.2 2.2 0 0 1 3.2-1.3" stroke="#dfe4ff" stroke-width="1" fill="none"/><circle cx="5.6" cy="4.8" r=".9" fill="#c0c8f8"/><circle cx="2.4" cy="7.6" r="1.9" fill="#e0e8f0"/><circle cx="2.4" cy="7.6" r="1.1" fill="#101010"/></svg>
<div class="t" style="left:64.5px;top:138.94px;"><b class="c">上盖</b></div>
<div class="a" style="left:62px;top:149.15px;width:1px;height:11.45px;background:#e8eaf5"></div>
<div class="a" style="left:62px;top:159.6px;width:300px;height:1px;background:#e8eaf5"></div>
<div class="a" style="left:48px;top:154.35px;width:5.3px;height:1px;background:#b8bce0"></div>
<svg class="a" style="left:52.5px;top:149.55px" width="10" height="10" viewBox="0 0 10 10"><circle cx="5.4" cy="4.6" r="3.4" fill="#5c64d6" stroke="#4c54c8" stroke-width="1.8" stroke-dasharray="1.2 .9"/><path d="M3.4 3.6a2.2 2.2 0 0 1 3.2-1.3" stroke="#dfe4ff" stroke-width="1" fill="none"/><circle cx="5.6" cy="4.8" r=".9" fill="#c0c8f8"/><circle cx="2.4" cy="7.6" r="1.9" fill="#e0e8f0"/><circle cx="2.4" cy="7.6" r="1.1" fill="#101010"/></svg>
<div class="t" style="left:64.5px;top:150.39px;"><b class="c">后盖</b></div>
<div class="a" style="left:62px;top:160.6px;width:1px;height:11.45px;background:#e8eaf5"></div>
<div class="a" style="left:62px;top:171.05px;width:300px;height:1px;background:#e8eaf5"></div>
<div class="a" style="left:48px;top:165.8px;width:5.3px;height:1px;background:#b8bce0"></div>
<svg class="a" style="left:52.5px;top:161px" width="10" height="10" viewBox="0 0 10 10"><circle cx="5.4" cy="4.6" r="3.4" fill="#5c64d6" stroke="#4c54c8" stroke-width="1.8" stroke-dasharray="1.2 .9"/><path d="M3.4 3.6a2.2 2.2 0 0 1 3.2-1.3" stroke="#dfe4ff" stroke-width="1" fill="none"/><circle cx="5.6" cy="4.8" r=".9" fill="#c0c8f8"/><circle cx="2.4" cy="7.6" r="1.9" fill="#e0e8f0"/><circle cx="2.4" cy="7.6" r="1.1" fill="#101010"/></svg>
<div class="t" style="left:64.5px;top:161.84px;"><b class="c">金属膜电阻器</b></div>
<div class="a" style="left:62px;top:172.05px;width:1px;height:11.45px;background:#e8eaf5"></div>
<div class="a" style="left:62px;top:182.5px;width:300px;height:1px;background:#e8eaf5"></div>
<div class="a" style="left:48px;top:177.25px;width:5.3px;height:1px;background:#b8bce0"></div>
<svg class="a" style="left:52.5px;top:172.45px" width="10" height="10" viewBox="0 0 10 10"><circle cx="5.4" cy="4.6" r="3.4" fill="#5c64d6" stroke="#4c54c8" stroke-width="1.8" stroke-dasharray="1.2 .9"/><path d="M3.4 3.6a2.2 2.2 0 0 1 3.2-1.3" stroke="#dfe4ff" stroke-width="1" fill="none"/><circle cx="5.6" cy="4.8" r=".9" fill="#c0c8f8"/><circle cx="2.4" cy="7.6" r="1.9" fill="#e0e8f0"/><circle cx="2.4" cy="7.6" r="1.1" fill="#101010"/></svg>
<div class="t" style="left:64.5px;top:173.29px;"><b class="c">金属膜电阻器</b></div>
<div class="a" style="left:62px;top:183.5px;width:1px;height:11.45px;background:#e8eaf5"></div>
<div class="a" style="left:62px;top:193.95px;width:300px;height:1px;background:#e8eaf5"></div>
<div class="a" style="left:48px;top:188.7px;width:5.3px;height:1px;background:#b8bce0"></div>
<svg class="a" style="left:52.5px;top:183.9px" width="10" height="10" viewBox="0 0 10 10"><circle cx="5.4" cy="4.6" r="3.4" fill="#5c64d6" stroke="#4c54c8" stroke-width="1.8" stroke-dasharray="1.2 .9"/><path d="M3.4 3.6a2.2 2.2 0 0 1 3.2-1.3" stroke="#dfe4ff" stroke-width="1" fill="none"/><circle cx="5.6" cy="4.8" r=".9" fill="#c0c8f8"/><circle cx="2.4" cy="7.6" r="1.9" fill="#e0e8f0"/><circle cx="2.4" cy="7.6" r="1.1" fill="#101010"/></svg>
<div class="t" style="left:64.5px;top:184.74px;"><b class="c">金属膜电阻器</b></div>
<div class="a" style="left:62px;top:194.95px;width:1px;height:11.45px;background:#e8eaf5"></div>
<div class="a" style="left:62px;top:205.4px;width:300px;height:1px;background:#e8eaf5"></div>
<div class="a" style="left:48px;top:200.15px;width:5.3px;height:1px;background:#b8bce0"></div>
<svg class="a" style="left:52.5px;top:195.35px" width="10" height="10" viewBox="0 0 10 10"><circle cx="5.4" cy="4.6" r="3.4" fill="#5c64d6" stroke="#4c54c8" stroke-width="1.8" stroke-dasharray="1.2 .9"/><path d="M3.4 3.6a2.2 2.2 0 0 1 3.2-1.3" stroke="#dfe4ff" stroke-width="1" fill="none"/><circle cx="5.6" cy="4.8" r=".9" fill="#c0c8f8"/><circle cx="2.4" cy="7.6" r="1.9" fill="#e0e8f0"/><circle cx="2.4" cy="7.6" r="1.1" fill="#101010"/></svg>
<div class="t" style="left:64.5px;top:196.19px;"><b class="c">金属膜电阻器</b></div>
<div class="a" style="left:62px;top:206.4px;width:1px;height:11.45px;background:#e8eaf5"></div>
<div class="a" style="left:62px;top:216.85px;width:300px;height:1px;background:#e8eaf5"></div>
<div class="a" style="left:48px;top:211.6px;width:5.3px;height:1px;background:#b8bce0"></div>
<svg class="a" style="left:52.5px;top:206.8px" width="10" height="10" viewBox="0 0 10 10"><circle cx="5.4" cy="4.6" r="3.4" fill="#5c64d6" stroke="#4c54c8" stroke-width="1.8" stroke-dasharray="1.2 .9"/><path d="M3.4 3.6a2.2 2.2 0 0 1 3.2-1.3" stroke="#dfe4ff" stroke-width="1" fill="none"/><circle cx="5.6" cy="4.8" r=".9" fill="#c0c8f8"/><circle cx="2.4" cy="7.6" r="1.9" fill="#e0e8f0"/><circle cx="2.4" cy="7.6" r="1.1" fill="#101010"/></svg>
<div class="t" style="left:64.5px;top:207.64px;"><b class="c">金属膜电阻器</b></div>
<div class="a" style="left:62px;top:217.85px;width:1px;height:11.45px;background:#e8eaf5"></div>
<div class="a" style="left:62px;top:228.3px;width:300px;height:1px;background:#e8eaf5"></div>
<div class="a" style="left:48px;top:223.05px;width:5.3px;height:1px;background:#b8bce0"></div>
<svg class="a" style="left:52.5px;top:218.25px" width="10" height="10" viewBox="0 0 10 10"><circle cx="5.4" cy="4.6" r="3.4" fill="#5c64d6" stroke="#4c54c8" stroke-width="1.8" stroke-dasharray="1.2 .9"/><path d="M3.4 3.6a2.2 2.2 0 0 1 3.2-1.3" stroke="#dfe4ff" stroke-width="1" fill="none"/><circle cx="5.6" cy="4.8" r=".9" fill="#c0c8f8"/><circle cx="2.4" cy="7.6" r="1.9" fill="#e0e8f0"/><circle cx="2.4" cy="7.6" r="1.1" fill="#101010"/></svg>
<div class="t" style="left:64.5px;top:219.09px;"><b class="c">金属膜电阻器</b></div>
<div class="a" style="left:62px;top:229.3px;width:1px;height:11.45px;background:#e8eaf5"></div>
<div class="a" style="left:62px;top:239.75px;width:300px;height:1px;background:#e8eaf5"></div>
<div class="a" style="left:48px;top:234.5px;width:5.3px;height:1px;background:#b8bce0"></div>
<svg class="a" style="left:52.5px;top:229.7px" width="10" height="10" viewBox="0 0 10 10"><circle cx="5.4" cy="4.6" r="3.4" fill="#5c64d6" stroke="#4c54c8" stroke-width="1.8" stroke-dasharray="1.2 .9"/><path d="M3.4 3.6a2.2 2.2 0 0 1 3.2-1.3" stroke="#dfe4ff" stroke-width="1" fill="none"/><circle cx="5.6" cy="4.8" r=".9" fill="#c0c8f8"/><circle cx="2.4" cy="7.6" r="1.9" fill="#e0e8f0"/><circle cx="2.4" cy="7.6" r="1.1" fill="#101010"/></svg>
<div class="t" style="left:64.5px;top:230.54px;"><b class="c">独石电容器</b></div>
</div>
<div class="a" style="left:250px;top:128.5px;width:8.5px;height:247.5px;background:#f2f7fc"></div>
<div class="a" style="left:250px;top:129px;width:8.5px;height:7px;background:linear-gradient(90deg,#eaf3fc,#c9e0f6);border:1px solid #bad3ec;border-radius:1.5px"></div>
<svg class="a" style="left:251px;top:130.5px" width="7" height="5" viewBox="0 0 7 5"><path d="M1 4l2.5-2.5L6 4" stroke="#1c4ca0" stroke-width="1.4" fill="none"/></svg>
<div class="a" style="left:250px;top:137px;width:8.5px;height:18px;background:linear-gradient(90deg,#eaf3fc,#c9e0f6);border:1px solid #bad3ec;border-radius:1.5px"></div>
<div class="a" style="left:252.5px;top:145px;width:3.5px;height:1px;background:#7898c8"></div>
<div class="a" style="left:252.5px;top:147px;width:3.5px;height:1px;background:#7898c8"></div>
<div class="a" style="left:250px;top:368px;width:8.5px;height:8px;background:linear-gradient(90deg,#eaf3fc,#c9e0f6);border:1px solid #bad3ec;border-radius:1.5px"></div>
<svg class="a" style="left:251px;top:369.5px" width="7" height="5" viewBox="0 0 7 5"><path d="M1 1l2.5 2.5L6 1" stroke="#1c4ca0" stroke-width="1.4" fill="none"/></svg>
<div class="a" style="left:135.2px;top:376px;width:114.8px;height:9.7px;background:#f2f7fc"></div>
<div class="a" style="left:135.5px;top:376.3px;width:9.5px;height:9.4px;background:linear-gradient(#eaf3fc,#c9e0f6);border:1px solid #bad3ec;border-radius:1.5px"></div>
<svg class="a" style="left:137.6px;top:377.7px" width="5" height="7" viewBox="0 0 5 7"><path d="M4 1L1.5 3.5 4 6" stroke="#1c4ca0" stroke-width="1.4" fill="none"/></svg>
<div class="a" style="left:145px;top:376.3px;width:26px;height:9.4px;background:linear-gradient(#eaf3fc,#c9e0f6);border:1px solid #bad3ec;border-radius:1.5px"></div>
<div class="a" style="left:157px;top:379px;width:1px;height:4px;background:#7898c8"></div>
<div class="a" style="left:159px;top:379px;width:1px;height:4px;background:#7898c8"></div>
<div class="a" style="left:240.5px;top:376.3px;width:9.5px;height:9.4px;background:linear-gradient(#eaf3fc,#c9e0f6);border:1px solid #bad3ec;border-radius:1.5px"></div>
<svg class="a" style="left:243px;top:377.7px" width="5" height="7" viewBox="0 0 5 7"><path d="M1 1l2.5 2.5L1 6" stroke="#1c4ca0" stroke-width="1.4" fill="none"/></svg>
<div class="a" style="left:250px;top:376px;width:9.2px;height:11.5px;background:#fafbfe"></div>
<div class="a" style="left:264.5px;top:97px;width:341.5px;height:296px;background:#f4f4fa;border:1px solid #cdd1e6;border-radius:2px"></div>
<div class="a" style="left:266.5px;top:99.5px;width:335px;height:289px;background:#f6f6fb;border:1px solid #d2d6ea"></div>
<div class="a" style="left:268.5px;top:101.5px;width:52.5px;height:13px;background:linear-gradient(#fbf6fb,#eedcec 45%,#dcc4dc);border:1px solid #d8bcd4;border-bottom:none;border-radius:3px 3px 0 0"></div>
<svg class="a" style="left:275px;top:104px" width="9" height="8" viewBox="0 0 9 8"><rect x="0" y="0" width="1.4" height="8" fill="#4a7ad8"/><path d="M2.8 1h6M2.8 3.5h6M2.8 6h6" stroke="#384050" stroke-width="1"/></svg>
<div class="t" style="left:285.5px;top:103.24px;"><b class="c">成员列表</b></div>
<div class="a" style="left:321.5px;top:102px;width:33.3px;height:12.5px;background:linear-gradient(#f4f9fe,#dcecf9 45%,#c4dcf2);border:1px solid #b4cce4;border-bottom:none;border-radius:3px 3px 0 0"></div>
<div class="t" style="left:337.2px;top:103.44px;"><b class="c">属性</b></div>
<div class="a" style="left:355.8px;top:102px;width:36.2px;height:12.5px;background:linear-gradient(#f4f9fe,#dcecf9 45%,#c4dcf2);border:1px solid #b4cce4;border-bottom:none;border-radius:3px 3px 0 0"></div>
<div class="t" style="left:373.6px;top:103.44px;"><b class="c">文档</b></div>
<div class="a" style="left:393px;top:102px;width:49.9px;height:12.5px;background:linear-gradient(#f4f9fe,#dcecf9 45%,#c4dcf2);border:1px solid #b4cce4;border-bottom:none;border-radius:3px 3px 0 0"></div>
<div class="t" style="left:409.4px;top:103.44px;"><b class="c">版本记录</b></div>
<div class="a" style="left:443.9px;top:102px;width:35.1px;height:12.5px;background:linear-gradient(#f4f9fe,#dcecf9 45%,#c4dcf2);border:1px solid #b4cce4;border-bottom:none;border-radius:3px 3px 0 0"></div>
<div class="t" style="left:459.3px;top:103.44px;"><b class="c">流程</b></div>
<svg class="a" style="left:325.7px;top:103.5px" width="9" height="9" viewBox="0 0 9 9"><rect x=".5" y="3.5" width="6" height="5" fill="#b8cce8" stroke="#6080b0" stroke-width=".6"/><path d="M2.5 4.5l3.5-4 3 2.5-3 3z" fill="#f0b828" stroke="#c08818" stroke-width=".4"/></svg>
<svg class="a" style="left:364px;top:103.5px" width="8" height="9" viewBox="0 0 8 9"><rect x=".5" y=".5" width="7" height="8" fill="#f4f8fc" stroke="#6080c0"/><path d="M2 4h4M2 6h4" stroke="#2050c0"/></svg>
<svg class="a" style="left:399px;top:103px" width="9" height="10" viewBox="0 0 9 10"><rect x="1.5" y=".5" width="7" height="8" fill="#f0f4f8" stroke="#607090"/><text x="0" y="9" font-size="7" font-family="Liberation Sans" font-weight="bold" fill="#d03020">1</text></svg>
<svg class="a" style="left:450px;top:104px" width="9" height="8" viewBox="0 0 9 8"><rect x="0" y="0" width="3" height="3" fill="#3050c0"/><rect x="5" y="0" width="3" height="3" fill="#e04030"/><rect x="0" y="5" width="3" height="3" fill="#e08020"/><rect x="5" y="5" width="3" height="3" fill="#30a040"/></svg>
<div class="a" style="left:268.5px;top:114.5px;width:329px;height:271px;background:#fff;border:1px solid #c6cbe3"></div>
<div class="a" style="left:269.5px;top:115.5px;width:318px;height:13.5px;background:linear-gradient(#fafafd,#e6e8f1)"></div>
<div class="a" style="left:269.5px;top:129px;width:318px;height:1px;background:#c4cae4"></div>
<div class="a" style="left:278px;top:116.5px;width:1px;height:12.5px;background:#d4d8ea"></div>
<div class="t" style="left:281.2px;top:118.94px;"><b class="c">名称</b></div>
<div class="a" style="left:342.3px;top:116.5px;width:1px;height:12.5px;background:#d4d8ea"></div>
<div class="t" style="left:345.5px;top:118.94px;"><b class="c">编号</b></div>
<div class="a" style="left:398px;top:116.5px;width:1px;height:12.5px;background:#d4d8ea"></div>
<div class="t" style="left:401.2px;top:118.94px;"><b class="c">型号</b></div>
<div class="a" style="left:432.5px;top:116.5px;width:1px;height:12.5px;background:#d4d8ea"></div>
<div class="t" style="left:435.7px;top:118.94px;"><b class="c">类型</b></div>
<div class="a" style="left:459.3px;top:116.5px;width:1px;height:12.5px;background:#d4d8ea"></div>
<div class="t" style="left:462.5px;top:118.94px;"><b class="c">类别</b></div>
<div class="a" style="left:491.4px;top:116.5px;width:1px;height:12.5px;background:#d4d8ea"></div>
<div class="t" style="left:494.6px;top:118.94px;"><b class="c">零件类型</b></div>
<div class="a" style="left:530px;top:116.5px;width:1px;height:12.5px;background:#d4d8ea"></div>
<div class="t" style="left:533.2px;top:118.94px;"><b class="c">制造方式</b></div>
<div class="a" style="left:573.2px;top:116.5px;width:1px;height:12.5px;background:#d4d8ea"></div>
<div class="t" style="left:576.4px;top:118.94px;"><b class="c">单位</b></div>
<div class="a" style="left:269.5px;top:129.5px;width:317.5px;height:245.5px;overflow:hidden">
<div class="a" style="left:72.8px;top:0px;width:245px;height:12.05px;background:#3064c6"></div>
<div class="a" style="left:8.8px;top:0.6px;width:64.3px;height:11.45px;background:#fff;border:1px solid #9cacdc"></div>
<div class="a" style="left:0px;top:0px;width:8.5px;height:11.05px;background:linear-gradient(#f0f1f8,#e2e4ef)"></div>
<div class="a" style="left:0px;top:11.05px;width:330px;height:1px;background:#dfe2f3"></div>
<div class="a" style="left:8.5px;top:0px;width:1px;height:12.05px;background:#dfe2f3"></div>
<div class="a" style="left:72.8px;top:0px;width:1px;height:12.05px;background:#dfe2f3"></div>
<div class="a" style="left:128.5px;top:0px;width:1px;height:12.05px;background:#dfe2f3"></div>
<div class="a" style="left:163px;top:0px;width:1px;height:12.05px;background:#dfe2f3"></div>
<div class="a" style="left:189.8px;top:0px;width:1px;height:12.05px;background:#dfe2f3"></div>
<div class="a" style="left:221.9px;top:0px;width:1px;height:12.05px;background:#dfe2f3"></div>
<div class="a" style="left:260.5px;top:0px;width:1px;height:12.05px;background:#dfe2f3"></div>
<div class="a" style="left:303.7px;top:0px;width:1px;height:12.05px;background:#dfe2f3"></div>
<div class="t" style="left:10.8px;top:1.14px;"><i class="l" style="width:23.87px;"><i style="transform:scaleX(0.884)">BJ-2100</i></i><b class="c">主板单点</b></div>
<div class="t" style="left:75.1px;top:1.14px;color:#fff"><i class="l" style="width:47.74px;"><i style="transform:scaleX(0.853)">730-721000-12X</i></i></div>
<div class="t" style="left:130.8px;top:1.14px;color:#fff"></div>
<div class="t" style="left:165.3px;top:1.14px;color:#fff"><b class="c">部件</b></div>
<div class="t" style="left:192.1px;top:1.14px;color:#fff"><b class="c">电源板</b></div>
<div class="t" style="left:224.2px;top:1.14px;color:#fff"><b class="c">专用件</b></div>
<div class="t" style="left:262.8px;top:1.14px;color:#fff"><b class="c">外协</b></div>
<div class="t" style="left:306px;top:1.14px;color:#fff"><b class="c">颗</b></div>
<div class="a" style="left:0px;top:12.05px;width:8.5px;height:11.05px;background:linear-gradient(#f0f1f8,#e2e4ef)"></div>
<div class="a" style="left:0px;top:23.1px;width:330px;height:1px;background:#dfe2f3"></div>
<div class="a" style="left:8.5px;top:12.05px;width:1px;height:12.05px;background:#dfe2f3"></div>
<div class="a" style="left:72.8px;top:12.05px;width:1px;height:12.05px;background:#dfe2f3"></div>
<div class="a" style="left:128.5px;top:12.05px;width:1px;height:12.05px;background:#dfe2f3"></div>
<div class="a" style="left:163px;top:12.05px;width:1px;height:12.05px;background:#dfe2f3"></div>
<div class="a" style="left:189.8px;top:12.05px;width:1px;height:12.05px;background:#dfe2f3"></div>
<div class="a" style="left:221.9px;top:12.05px;width:1px;height:12.05px;background:#dfe2f3"></div>
<div class="a" style="left:260.5px;top:12.05px;width:1px;height:12.05px;background:#dfe2f3"></div>
<div class="a" style="left:303.7px;top:12.05px;width:1px;height:12.05px;background:#dfe2f3"></div>
<div class="t" style="left:10.8px;top:13.19px;"><i class="l" style="width:13.64px;"><i style="transform:scaleX(0.853)">BJ20</i></i><b class="c">主显示板</b></div>
<div class="t" style="left:75.1px;top:13.19px;"><i class="l" style="width:47.74px;"><i style="transform:scaleX(0.853)">730-828000-04X</i></i></div>
<div class="t" style="left:130.8px;top:13.19px;"></div>
<div class="t" style="left:165.3px;top:13.19px;"><b class="c">部件</b></div>
<div class="t" style="left:192.1px;top:13.19px;"><b class="c">电源板</b></div>
<div class="t" style="left:224.2px;top:13.19px;"><b class="c">专用件</b></div>
<div class="t" style="left:262.8px;top:13.19px;"><b class="c">外协</b></div>
<div class="t" style="left:306px;top:13.19px;"><b class="c">颗</b></div>
<div class="a" style="left:0px;top:24.1px;width:8.5px;height:11.05px;background:linear-gradient(#f0f1f8,#e2e4ef)"></div>
<div class="a" style="left:0px;top:35.15px;width:330px;height:1px;background:#dfe2f3"></div>
<div class="a" style="left:8.5px;top:24.1px;width:1px;height:12.05px;background:#dfe2f3"></div>
<div class="a" style="left:72.8px;top:24.1px;width:1px;height:12.05px;background:#dfe2f3"></div>
<div class="a" style="left:128.5px;top:24.1px;width:1px;height:12.05px;background:#dfe2f3"></div>
<div class="a" style="left:163px;top:24.1px;width:1px;height:12.05px;background:#dfe2f3"></div>
<div class="a" style="left:189.8px;top:24.1px;width:1px;height:12.05px;background:#dfe2f3"></div>
<div class="a" style="left:221.9px;top:24.1px;width:1px;height:12.05px;background:#dfe2f3"></div>
<div class="a" style="left:260.5px;top:24.1px;width:1px;height:12.05px;background:#dfe2f3"></div>
<div class="a" style="left:303.7px;top:24.1px;width:1px;height:12.05px;background:#dfe2f3"></div>
<div class="t" style="left:10.8px;top:25.24px;"><b class="c">上盖</b></div>
<div class="t" style="left:75.1px;top:25.24px;"><i class="l" style="width:47.74px;"><i style="transform:scaleX(0.853)">201-830302-00X</i></i></div>
<div class="t" style="left:130.8px;top:25.24px;"><b class="c">塑料</b><i class="l" style="width:10.23px;"><i style="transform:scaleX(0.682)">ABS</i></i></div>
<div class="t" style="left:165.3px;top:25.24px;"><b class="c">零件</b></div>
<div class="t" style="left:192.1px;top:25.24px;"><b class="c">塑料类</b></div>
<div class="t" style="left:224.2px;top:25.24px;"><b class="c">标准件</b></div>
<div class="t" style="left:262.8px;top:25.24px;"><b class="c">外协</b></div>
<div class="t" style="left:306px;top:25.24px;"><b class="c">条</b></div>
<div class="a" style="left:0px;top:36.15px;width:8.5px;height:11.05px;background:linear-gradient(#f0f1f8,#e2e4ef)"></div>
<div class="a" style="left:0px;top:47.2px;width:330px;height:1px;background:#dfe2f3"></div>
<div class="a" style="left:8.5px;top:36.15px;width:1px;height:12.05px;background:#dfe2f3"></div>
<div class="a" style="left:72.8px;top:36.15px;width:1px;height:12.05px;background:#dfe2f3"></div>
<div class="a" style="left:128.5px;top:36.15px;width:1px;height:12.05px;background:#dfe2f3"></div>
<div class="a" style="left:163px;top:36.15px;width:1px;height:12.05px;background:#dfe2f3"></div>
<div class="a" style="left:189.8px;top:36.15px;width:1px;height:12.05px;background:#dfe2f3"></div>
<div class="a" style="left:221.9px;top:36.15px;width:1px;height:12.05px;background:#dfe2f3"></div>
<div class="a" style="left:260.5px;top:36.15px;width:1px;height:12.05px;background:#dfe2f3"></div>
<div class="a" style="left:303.7px;top:36.15px;width:1px;height:12.05px;background:#dfe2f3"></div>
<div class="t" style="left:10.8px;top:37.29px;"><b class="c">后盖</b></div>
<div class="t" style="left:75.1px;top:37.29px;"><i class="l" style="width:47.74px;"><i style="transform:scaleX(0.853)">202-990002-01X</i></i></div>
<div class="t" style="left:130.8px;top:37.29px;"><b class="c">塑料</b><i class="l" style="width:10.23px;"><i style="transform:scaleX(0.682)">ABS</i></i></div>
<div class="t" style="left:165.3px;top:37.29px;"><b class="c">零件</b></div>
<div class="t" style="left:192.1px;top:37.29px;"><b class="c">塑料类</b></div>
<div class="t" style="left:224.2px;top:37.29px;"><b class="c">标准件</b></div>
<div class="t" style="left:262.8px;top:37.29px;"><b class="c">外协</b></div>
<div class="t" style="left:306px;top:37.29px;"><b class="c">条</b></div>
<div class="a" style="left:0px;top:48.2px;width:8.5px;height:11.05px;background:linear-gradient(#f0f1f8,#e2e4ef)"></div>
<div class="a" style="left:0px;top:59.25px;width:330px;height:1px;background:#dfe2f3"></div>
<div class="a" style="left:8.5px;top:48.2px;width:1px;height:12.05px;background:#dfe2f3"></div>
<div class="a" style="left:72.8px;top:48.2px;width:1px;height:12.05px;background:#dfe2f3"></div>
<div class="a" style="left:128.5px;top:48.2px;width:1px;height:12.05px;background:#dfe2f3"></div>
<div class="a" style="left:163px;top:48.2px;width:1px;height:12.05px;background:#dfe2f3"></div>
<div class="a" style="left:189.8px;top:48.2px;width:1px;height:12.05px;background:#dfe2f3"></div>
<div class="a" style="left:221.9px;top:48.2px;width:1px;height:12.05px;background:#dfe2f3"></div>
<div class="a" style="left:260.5px;top:48.2px;width:1px;height:12.05px;background:#dfe2f3"></div>
<div class="a" style="left:303.7px;top:48.2px;width:1px;height:12.05px;background:#dfe2f3"></div>
<div class="t" style="left:10.8px;top:49.34px;"><b class="c">探头壳</b></div>
<div class="t" style="left:75.1px;top:49.34px;"><i class="l" style="width:47.74px;"><i style="transform:scaleX(0.853)">208-601701-01X</i></i></div>
<div class="t" style="left:130.8px;top:49.34px;"><b class="c">塑料</b><i class="l" style="width:10.23px;"><i style="transform:scaleX(0.682)">ABS</i></i></div>
<div class="t" style="left:165.3px;top:49.34px;"><b class="c">零件</b></div>
<div class="t" style="left:192.1px;top:49.34px;"><b class="c">塑料类</b></div>
<div class="t" style="left:224.2px;top:49.34px;"><b class="c">标准件</b></div>
<div class="t" style="left:262.8px;top:49.34px;"><b class="c">外协</b></div>
<div class="t" style="left:306px;top:49.34px;"><b class="c">条</b></div>
<div class="a" style="left:0px;top:60.25px;width:8.5px;height:11.05px;background:linear-gradient(#f0f1f8,#e2e4ef)"></div>
<div class="a" style="left:0px;top:71.3px;width:330px;height:1px;background:#dfe2f3"></div>
<div class="a" style="left:8.5px;top:60.25px;width:1px;height:12.05px;background:#dfe2f3"></div>
<div class="a" style="left:72.8px;top:60.25px;width:1px;height:12.05px;background:#dfe2f3"></div>
<div class="a" style="left:128.5px;top:60.25px;width:1px;height:12.05px;background:#dfe2f3"></div>
<div class="a" style="left:163px;top:60.25px;width:1px;height:12.05px;background:#dfe2f3"></div>
<div class="a" style="left:189.8px;top:60.25px;width:1px;height:12.05px;background:#dfe2f3"></div>
<div class="a" style="left:221.9px;top:60.25px;width:1px;height:12.05px;background:#dfe2f3"></div>
<div class="a" style="left:260.5px;top:60.25px;width:1px;height:12.05px;background:#dfe2f3"></div>
<div class="a" style="left:303.7px;top:60.25px;width:1px;height:12.05px;background:#dfe2f3"></div>
<div class="t" style="left:10.8px;top:61.39px;"><b class="c">左侧盖</b></div>
<div class="t" style="left:75.1px;top:61.39px;"><i class="l" style="width:47.74px;"><i style="transform:scaleX(0.853)">209-990001-01X</i></i></div>
<div class="t" style="left:130.8px;top:61.39px;"><b class="c">塑料</b><i class="l" style="width:10.23px;"><i style="transform:scaleX(0.682)">ABS</i></i></div>
<div class="t" style="left:165.3px;top:61.39px;"><b class="c">零件</b></div>
<div class="t" style="left:192.1px;top:61.39px;"><b class="c">塑料类</b></div>
<div class="t" style="left:224.2px;top:61.39px;"><b class="c">标准件</b></div>
<div class="t" style="left:262.8px;top:61.39px;"><b class="c">外协</b></div>
<div class="t" style="left:306px;top:61.39px;"><b class="c">条</b></div>
<div class="a" style="left:0px;top:72.3px;width:8.5px;height:11.05px;background:linear-gradient(#f0f1f8,#e2e4ef)"></div>
<div class="a" style="left:0px;top:83.35px;width:330px;height:1px;background:#dfe2f3"></div>
<div class="a" style="left:8.5px;top:72.3px;width:1px;height:12.05px;background:#dfe2f3"></div>
<div class="a" style="left:72.8px;top:72.3px;width:1px;height:12.05px;background:#dfe2f3"></div>
<div class="a" style="left:128.5px;top:72.3px;width:1px;height:12.05px;background:#dfe2f3"></div>
<div class="a" style="left:163px;top:72.3px;width:1px;height:12.05px;background:#dfe2f3"></div>
<div class="a" style="left:189.8px;top:72.3px;width:1px;height:12.05px;background:#dfe2f3"></div>
<div class="a" style="left:221.9px;top:72.3px;width:1px;height:12.05px;background:#dfe2f3"></div>
<div class="a" style="left:260.5px;top:72.3px;width:1px;height:12.05px;background:#dfe2f3"></div>
<div class="a" style="left:303.7px;top:72.3px;width:1px;height:12.05px;background:#dfe2f3"></div>
<div class="t" style="left:10.8px;top:73.44px;"><b class="c">右侧盖</b></div>
<div class="t" style="left:75.1px;top:73.44px;"><i class="l" style="width:47.74px;"><i style="transform:scaleX(0.853)">209-990002-01X</i></i></div>
<div class="t" style="left:130.8px;top:73.44px;"><b class="c">塑料</b><i class="l" style="width:10.23px;"><i style="transform:scaleX(0.682)">ABS</i></i></div>
<div class="t" style="left:165.3px;top:73.44px;"><b class="c">零件</b></div>
<div class="t" style="left:192.1px;top:73.44px;"><b class="c">塑料类</b></div>
<div class="t" style="left:224.2px;top:73.44px;"><b class="c">标准件</b></div>
<div class="t" style="left:262.8px;top:73.44px;"><b class="c">外协</b></div>
<div class="t" style="left:306px;top:73.44px;"><b class="c">条</b></div>
<div class="a" style="left:0px;top:84.35px;width:8.5px;height:11.05px;background:linear-gradient(#f0f1f8,#e2e4ef)"></div>
<div class="a" style="left:0px;top:95.4px;width:330px;height:1px;background:#dfe2f3"></div>
<div class="a" style="left:8.5px;top:84.35px;width:1px;height:12.05px;background:#dfe2f3"></div>
<div class="a" style="left:72.8px;top:84.35px;width:1px;height:12.05px;background:#dfe2f3"></div>
<div class="a" style="left:128.5px;top:84.35px;width:1px;height:12.05px;background:#dfe2f3"></div>
<div class="a" style="left:163px;top:84.35px;width:1px;height:12.05px;background:#dfe2f3"></div>
<div class="a" style="left:189.8px;top:84.35px;width:1px;height:12.05px;background:#dfe2f3"></div>
<div class="a" style="left:221.9px;top:84.35px;width:1px;height:12.05px;background:#dfe2f3"></div>
<div class="a" style="left:260.5px;top:84.35px;width:1px;height:12.05px;background:#dfe2f3"></div>
<div class="a" style="left:303.7px;top:84.35px;width:1px;height:12.05px;background:#dfe2f3"></div>
<div class="t" style="left:10.8px;top:85.49px;"><b class="c">铝锅盖</b></div>
<div class="t" style="left:75.1px;top:85.49px;"><i class="l" style="width:47.74px;"><i style="transform:scaleX(0.853)">214-839404-01X</i></i></div>
<div class="t" style="left:130.8px;top:85.49px;"><b class="c">塑料</b><i class="l" style="width:10.23px;"><i style="transform:scaleX(0.682)">ABS</i></i></div>
<div class="t" style="left:165.3px;top:85.49px;"><b class="c">零件</b></div>
<div class="t" style="left:192.1px;top:85.49px;"><b class="c">塑料类</b></div>
<div class="t" style="left:224.2px;top:85.49px;"><b class="c">标准件</b></div>
<div class="t" style="left:262.8px;top:85.49px;"><b class="c">外协</b></div>
<div class="t" style="left:306px;top:85.49px;"><b class="c">条</b></div>
<div class="a" style="left:0px;top:96.4px;width:8.5px;height:11.05px;background:linear-gradient(#f0f1f8,#e2e4ef)"></div>
<div class="a" style="left:0px;top:107.45px;width:330px;height:1px;background:#dfe2f3"></div>
<div class="a" style="left:8.5px;top:96.4px;width:1px;height:12.05px;background:#dfe2f3"></div>
<div class="a" style="left:72.8px;top:96.4px;width:1px;height:12.05px;background:#dfe2f3"></div>
<div class="a" style="left:128.5px;top:96.4px;width:1px;height:12.05px;background:#dfe2f3"></div>
<div class="a" style="left:163px;top:96.4px;width:1px;height:12.05px;background:#dfe2f3"></div>
<div class="a" style="left:189.8px;top:96.4px;width:1px;height:12.05px;background:#dfe2f3"></div>
<div class="a" style="left:221.9px;top:96.4px;width:1px;height:12.05px;background:#dfe2f3"></div>
<div class="a" style="left:260.5px;top:96.4px;width:1px;height:12.05px;background:#dfe2f3"></div>
<div class="a" style="left:303.7px;top:96.4px;width:1px;height:12.05px;background:#dfe2f3"></div>
<div class="t" style="left:10.8px;top:97.54px;"><b class="c">长铝头支架</b></div>
<div class="t" style="left:75.1px;top:97.54px;"><i class="l" style="width:47.74px;"><i style="transform:scaleX(0.853)">229-823401-00X</i></i></div>
<div class="t" style="left:130.8px;top:97.54px;"><b class="c">塑料</b><i class="l" style="width:10.23px;"><i style="transform:scaleX(0.682)">ABS</i></i></div>
<div class="t" style="left:165.3px;top:97.54px;"><b class="c">零件</b></div>
<div class="t" style="left:192.1px;top:97.54px;"><b class="c">塑料类</b></div>
<div class="t" style="left:224.2px;top:97.54px;"><b class="c">标准件</b></div>
<div class="t" style="left:262.8px;top:97.54px;"><b class="c">外协</b></div>
<div class="t" style="left:306px;top:97.54px;"><b class="c">条</b></div>
<div class="a" style="left:0px;top:108.45px;width:8.5px;height:11.05px;background:linear-gradient(#f0f1f8,#e2e4ef)"></div>
<div class="a" style="left:0px;top:119.5px;width:330px;height:1px;background:#dfe2f3"></div>
<div class="a" style="left:8.5px;top:108.45px;width:1px;height:12.05px;background:#dfe2f3"></div>
<div class="a" style="left:72.8px;top:108.45px;width:1px;height:12.05px;background:#dfe2f3"></div>
<div class="a" style="left:128.5px;top:108.45px;width:1px;height:12.05px;background:#dfe2f3"></div>
<div class="a" style="left:163px;top:108.45px;width:1px;height:12.05px;background:#dfe2f3"></div>
<div class="a" style="left:189.8px;top:108.45px;width:1px;height:12.05px;background:#dfe2f3"></div>
<div class="a" style="left:221.9px;top:108.45px;width:1px;height:12.05px;background:#dfe2f3"></div>
<div class="a" style="left:260.5px;top:108.45px;width:1px;height:12.05px;background:#dfe2f3"></div>
<div class="a" style="left:303.7px;top:108.45px;width:1px;height:12.05px;background:#dfe2f3"></div>
<div class="t" style="left:10.8px;top:109.59px;"><b class="c">预置电眼支架</b></div>
<div class="t" style="left:75.1px;top:109.59px;"><i class="l" style="width:47.74px;"><i style="transform:scaleX(0.853)">229-823302-00X</i></i></div>
<div class="t" style="left:130.8px;top:109.59px;"><b class="c">塑料</b><i class="l" style="width:10.23px;"><i style="transform:scaleX(0.682)">ABS</i></i></div>
<div class="t" style="left:165.3px;top:109.59px;"><b class="c">零件</b></div>
<div class="t" style="left:192.1px;top:109.59px;"><b class="c">塑料类</b></div>
<div class="t" style="left:224.2px;top:109.59px;"><b class="c">标准件</b></div>
<div class="t" style="left:262.8px;top:109.59px;"><b class="c">外协</b></div>
<div class="t" style="left:306px;top:109.59px;"><b class="c">条</b></div>
<div class="a" style="left:0px;top:120.5px;width:8.5px;height:11.05px;background:linear-gradient(#f0f1f8,#e2e4ef)"></div>
<div class="a" style="left:0px;top:131.55px;width:330px;height:1px;background:#dfe2f3"></div>
<div class="a" style="left:8.5px;top:120.5px;width:1px;height:12.05px;background:#dfe2f3"></div>
<div class="a" style="left:72.8px;top:120.5px;width:1px;height:12.05px;background:#dfe2f3"></div>
<div class="a" style="left:128.5px;top:120.5px;width:1px;height:12.05px;background:#dfe2f3"></div>
<div class="a" style="left:163px;top:120.5px;width:1px;height:12.05px;background:#dfe2f3"></div>
<div class="a" style="left:189.8px;top:120.5px;width:1px;height:12.05px;background:#dfe2f3"></div>
<div class="a" style="left:221.9px;top:120.5px;width:1px;height:12.05px;background:#dfe2f3"></div>
<div class="a" style="left:260.5px;top:120.5px;width:1px;height:12.05px;background:#dfe2f3"></div>
<div class="a" style="left:303.7px;top:120.5px;width:1px;height:12.05px;background:#dfe2f3"></div>
<div class="t" style="left:10.8px;top:121.64px;"><b class="c">接杉轮护罩</b></div>
<div class="t" style="left:75.1px;top:121.64px;"><i class="l" style="width:47.74px;"><i style="transform:scaleX(0.853)">236-823301-00X</i></i></div>
<div class="t" style="left:130.8px;top:121.64px;"><b class="c">塑料</b><i class="l" style="width:10.23px;"><i style="transform:scaleX(0.682)">ABS</i></i></div>
<div class="t" style="left:165.3px;top:121.64px;"><b class="c">零件</b></div>
<div class="t" style="left:192.1px;top:121.64px;"><b class="c">塑料类</b></div>
<div class="t" style="left:224.2px;top:121.64px;"><b class="c">标准件</b></div>
<div class="t" style="left:262.8px;top:121.64px;"><b class="c">外协</b></div>
<div class="t" style="left:306px;top:121.64px;"><b class="c">条</b></div>
<div class="a" style="left:0px;top:132.55px;width:8.5px;height:11.05px;background:linear-gradient(#f0f1f8,#e2e4ef)"></div>
<div class="a" style="left:0px;top:143.6px;width:330px;height:1px;background:#dfe2f3"></div>
<div class="a" style="left:8.5px;top:132.55px;width:1px;height:12.05px;background:#dfe2f3"></div>
<div class="a" style="left:72.8px;top:132.55px;width:1px;height:12.05px;background:#dfe2f3"></div>
<div class="a" style="left:128.5px;top:132.55px;width:1px;height:12.05px;background:#dfe2f3"></div>
<div class="a" style="left:163px;top:132.55px;width:1px;height:12.05px;background:#dfe2f3"></div>
<div class="a" style="left:189.8px;top:132.55px;width:1px;height:12.05px;background:#dfe2f3"></div>
<div class="a" style="left:221.9px;top:132.55px;width:1px;height:12.05px;background:#dfe2f3"></div>
<div class="a" style="left:260.5px;top:132.55px;width:1px;height:12.05px;background:#dfe2f3"></div>
<div class="a" style="left:303.7px;top:132.55px;width:1px;height:12.05px;background:#dfe2f3"></div>
<div class="t" style="left:10.8px;top:133.69px;"><b class="c">挡杉板</b></div>
<div class="t" style="left:75.1px;top:133.69px;"><i class="l" style="width:47.74px;"><i style="transform:scaleX(0.853)">239-990001-01X</i></i></div>
<div class="t" style="left:130.8px;top:133.69px;"><b class="c">塑料</b><i class="l" style="width:10.23px;"><i style="transform:scaleX(0.682)">ABS</i></i></div>
<div class="t" style="left:165.3px;top:133.69px;"><b class="c">零件</b></div>
<div class="t" style="left:192.1px;top:133.69px;"><b class="c">塑料类</b></div>
<div class="t" style="left:224.2px;top:133.69px;"><b class="c">标准件</b></div>
<div class="t" style="left:262.8px;top:133.69px;"><b class="c">外协</b></div>
<div class="t" style="left:306px;top:133.69px;"><b class="c">条</b></div>
<div class="a" style="left:0px;top:144.6px;width:8.5px;height:11.05px;background:linear-gradient(#f0f1f8,#e2e4ef)"></div>
<div class="a" style="left:0px;top:155.65px;width:330px;height:1px;background:#dfe2f3"></div>
<div class="a" style="left:8.5px;top:144.6px;width:1px;height:12.05px;background:#dfe2f3"></div>
<div class="a" style="left:72.8px;top:144.6px;width:1px;height:12.05px;background:#dfe2f3"></div>
<div class="a" style="left:128.5px;top:144.6px;width:1px;height:12.05px;background:#dfe2f3"></div>
<div class="a" style="left:163px;top:144.6px;width:1px;height:12.05px;background:#dfe2f3"></div>
<div class="a" style="left:189.8px;top:144.6px;width:1px;height:12.05px;background:#dfe2f3"></div>
<div class="a" style="left:221.9px;top:144.6px;width:1px;height:12.05px;background:#dfe2f3"></div>
<div class="a" style="left:260.5px;top:144.6px;width:1px;height:12.05px;background:#dfe2f3"></div>
<div class="a" style="left:303.7px;top:144.6px;width:1px;height:12.05px;background:#dfe2f3"></div>
<div class="t" style="left:10.8px;top:145.74px;"><b class="c">滑杉板</b></div>
<div class="t" style="left:75.1px;top:145.74px;"><i class="l" style="width:47.74px;"><i style="transform:scaleX(0.853)">239-823401-00X</i></i></div>
<div class="t" style="left:130.8px;top:145.74px;"><b class="c">塑料</b><i class="l" style="width:10.23px;"><i style="transform:scaleX(0.682)">ABS</i></i></div>
<div class="t" style="left:165.3px;top:145.74px;"><b class="c">零件</b></div>
<div class="t" style="left:192.1px;top:145.74px;"><b class="c">塑料类</b></div>
<div class="t" style="left:224.2px;top:145.74px;"><b class="c">标准件</b></div>
<div class="t" style="left:262.8px;top:145.74px;"><b class="c">外协</b></div>
<div class="t" style="left:306px;top:145.74px;"><b class="c">条</b></div>
<div class="a" style="left:0px;top:156.65px;width:8.5px;height:11.05px;background:linear-gradient(#f0f1f8,#e2e4ef)"></div>
<div class="a" style="left:0px;top:167.7px;width:330px;height:1px;background:#dfe2f3"></div>
<div class="a" style="left:8.5px;top:156.65px;width:1px;height:12.05px;background:#dfe2f3"></div>
<div class="a" style="left:72.8px;top:156.65px;width:1px;height:12.05px;background:#dfe2f3"></div>
<div class="a" style="left:128.5px;top:156.65px;width:1px;height:12.05px;background:#dfe2f3"></div>
<div class="a" style="left:163px;top:156.65px;width:1px;height:12.05px;background:#dfe2f3"></div>
<div class="a" style="left:189.8px;top:156.65px;width:1px;height:12.05px;background:#dfe2f3"></div>
<div class="a" style="left:221.9px;top:156.65px;width:1px;height:12.05px;background:#dfe2f3"></div>
<div class="a" style="left:260.5px;top:156.65px;width:1px;height:12.05px;background:#dfe2f3"></div>
<div class="a" style="left:303.7px;top:156.65px;width:1px;height:12.05px;background:#dfe2f3"></div>
<div class="t" style="left:10.8px;top:157.79px;"><b class="c">提手（</b><i class="l" style="width:3.41px;"><i style="transform:scaleX(0.568)">A</i></i><b class="c">、</b><i class="l" style="width:3.41px;"><i style="transform:scaleX(0.682)">B</i></i><b class="c">）</b></div>
<div class="t" style="left:75.1px;top:157.79px;"><i class="l" style="width:47.74px;"><i style="transform:scaleX(0.853)">249-990001-01X</i></i></div>
<div class="t" style="left:130.8px;top:157.79px;"><b class="c">塑料</b><i class="l" style="width:10.23px;"><i style="transform:scaleX(0.682)">ABS</i></i></div>
<div class="t" style="left:165.3px;top:157.79px;"><b class="c">零件</b></div>
<div class="t" style="left:192.1px;top:157.79px;"><b class="c">塑料类</b></div>
<div class="t" style="left:224.2px;top:157.79px;"><b class="c">标准件</b></div>
<div class="t" style="left:262.8px;top:157.79px;"><b class="c">外协</b></div>
<div class="t" style="left:306px;top:157.79px;"><b class="c">条</b></div>
<div class="a" style="left:0px;top:168.7px;width:8.5px;height:11.05px;background:linear-gradient(#f0f1f8,#e2e4ef)"></div>
<div class="a" style="left:0px;top:179.75px;width:330px;height:1px;background:#dfe2f3"></div>
<div class="a" style="left:8.5px;top:168.7px;width:1px;height:12.05px;background:#dfe2f3"></div>
<div class="a" style="left:72.8px;top:168.7px;width:1px;height:12.05px;background:#dfe2f3"></div>
<div class="a" style="left:128.5px;top:168.7px;width:1px;height:12.05px;background:#dfe2f3"></div>
<div class="a" style="left:163px;top:168.7px;width:1px;height:12.05px;background:#dfe2f3"></div>
<div class="a" style="left:189.8px;top:168.7px;width:1px;height:12.05px;background:#dfe2f3"></div>
<div class="a" style="left:221.9px;top:168.7px;width:1px;height:12.05px;background:#dfe2f3"></div>
<div class="a" style="left:260.5px;top:168.7px;width:1px;height:12.05px;background:#dfe2f3"></div>
<div class="a" style="left:303.7px;top:168.7px;width:1px;height:12.05px;background:#dfe2f3"></div>
<div class="t" style="left:10.8px;top:169.84px;"><b class="c">压线夹（一）</b></div>
<div class="t" style="left:75.1px;top:169.84px;"><i class="l" style="width:47.74px;"><i style="transform:scaleX(0.853)">258-839401-00X</i></i></div>
<div class="t" style="left:130.8px;top:169.84px;"><b class="c">尼龙</b><i class="l" style="width:13.64px;"><i style="transform:scaleX(0.853)">1010</i></i></div>
<div class="t" style="left:165.3px;top:169.84px;"><b class="c">零件</b></div>
<div class="t" style="left:192.1px;top:169.84px;"><b class="c">塑料类</b></div>
<div class="t" style="left:224.2px;top:169.84px;"><b class="c">标准件</b></div>
<div class="t" style="left:262.8px;top:169.84px;"><b class="c">外协</b></div>
<div class="t" style="left:306px;top:169.84px;"><b class="c">条</b></div>
<div class="a" style="left:0px;top:180.75px;width:8.5px;height:11.05px;background:linear-gradient(#f0f1f8,#e2e4ef)"></div>
<div class="a" style="left:0px;top:191.8px;width:330px;height:1px;background:#dfe2f3"></div>
<div class="a" style="left:8.5px;top:180.75px;width:1px;height:12.05px;background:#dfe2f3"></div>
<div class="a" style="left:72.8px;top:180.75px;width:1px;height:12.05px;background:#dfe2f3"></div>
<div class="a" style="left:128.5px;top:180.75px;width:1px;height:12.05px;background:#dfe2f3"></div>
<div class="a" style="left:163px;top:180.75px;width:1px;height:12.05px;background:#dfe2f3"></div>
<div class="a" style="left:189.8px;top:180.75px;width:1px;height:12.05px;background:#dfe2f3"></div>
<div class="a" style="left:221.9px;top:180.75px;width:1px;height:12.05px;background:#dfe2f3"></div>
<div class="a" style="left:260.5px;top:180.75px;width:1px;height:12.05px;background:#dfe2f3"></div>
<div class="a" style="left:303.7px;top:180.75px;width:1px;height:12.05px;background:#dfe2f3"></div>
<div class="t" style="left:10.8px;top:181.89px;"><b class="c">压线夹（二）</b></div>
<div class="t" style="left:75.1px;top:181.89px;"><i class="l" style="width:47.74px;"><i style="transform:scaleX(0.853)">258-839402-00X</i></i></div>
<div class="t" style="left:130.8px;top:181.89px;"><b class="c">尼龙</b><i class="l" style="width:13.64px;"><i style="transform:scaleX(0.853)">1010</i></i></div>
<div class="t" style="left:165.3px;top:181.89px;"><b class="c">零件</b></div>
<div class="t" style="left:192.1px;top:181.89px;"><b class="c">塑料类</b></div>
<div class="t" style="left:224.2px;top:181.89px;"><b class="c">标准件</b></div>
<div class="t" style="left:262.8px;top:181.89px;"><b class="c">外协</b></div>
<div class="t" style="left:306px;top:181.89px;"><b class="c">条</b></div>
<div class="a" style="left:0px;top:192.8px;width:8.5px;height:11.05px;background:linear-gradient(#f0f1f8,#e2e4ef)"></div>
<div class="a" style="left:0px;top:203.85px;width:330px;height:1px;background:#dfe2f3"></div>
<div class="a" style="left:8.5px;top:192.8px;width:1px;height:12.05px;background:#dfe2f3"></div>
<div class="a" style="left:72.8px;top:192.8px;width:1px;height:12.05px;background:#dfe2f3"></div>
<div class="a" style="left:128.5px;top:192.8px;width:1px;height:12.05px;background:#dfe2f3"></div>
<div class="a" style="left:163px;top:192.8px;width:1px;height:12.05px;background:#dfe2f3"></div>
<div class="a" style="left:189.8px;top:192.8px;width:1px;height:12.05px;background:#dfe2f3"></div>
<div class="a" style="left:221.9px;top:192.8px;width:1px;height:12.05px;background:#dfe2f3"></div>
<div class="a" style="left:260.5px;top:192.8px;width:1px;height:12.05px;background:#dfe2f3"></div>
<div class="a" style="left:303.7px;top:192.8px;width:1px;height:12.05px;background:#dfe2f3"></div>
<div class="t" style="left:10.8px;top:193.94px;"><b class="c">方形塑料线框</b></div>
<div class="t" style="left:75.1px;top:193.94px;"><i class="l" style="width:47.74px;"><i style="transform:scaleX(0.853)">258-839403-00X</i></i></div>
<div class="t" style="left:130.8px;top:193.94px;"><b class="c">尼龙</b><i class="l" style="width:13.64px;"><i style="transform:scaleX(0.853)">1010</i></i></div>
<div class="t" style="left:165.3px;top:193.94px;"><b class="c">零件</b></div>
<div class="t" style="left:192.1px;top:193.94px;"><b class="c">塑料类</b></div>
<div class="t" style="left:224.2px;top:193.94px;"><b class="c">标准件</b></div>
<div class="t" style="left:262.8px;top:193.94px;"><b class="c">外协</b></div>
<div class="t" style="left:306px;top:193.94px;"><b class="c">条</b></div>
<div class="a" style="left:0px;top:204.85px;width:8.5px;height:11.05px;background:linear-gradient(#f0f1f8,#e2e4ef)"></div>
<div class="a" style="left:0px;top:215.9px;width:330px;height:1px;background:#dfe2f3"></div>
<div class="a" style="left:8.5px;top:204.85px;width:1px;height:12.05px;background:#dfe2f3"></div>
<div class="a" style="left:72.8px;top:204.85px;width:1px;height:12.05px;background:#dfe2f3"></div>
<div class="a" style="left:128.5px;top:204.85px;width:1px;height:12.05px;background:#dfe2f3"></div>
<div class="a" style="left:163px;top:204.85px;width:1px;height:12.05px;background:#dfe2f3"></div>
<div class="a" style="left:189.8px;top:204.85px;width:1px;height:12.05px;background:#dfe2f3"></div>
<div class="a" style="left:221.9px;top:204.85px;width:1px;height:12.05px;background:#dfe2f3"></div>
<div class="a" style="left:260.5px;top:204.85px;width:1px;height:12.05px;background:#dfe2f3"></div>
<div class="a" style="left:303.7px;top:204.85px;width:1px;height:12.05px;background:#dfe2f3"></div>
<div class="t" style="left:10.8px;top:205.99px;"><b class="c">上电眼座</b></div>
<div class="t" style="left:75.1px;top:205.99px;"><i class="l" style="width:47.74px;"><i style="transform:scaleX(0.853)">259-839403-00X</i></i></div>
<div class="t" style="left:130.8px;top:205.99px;"><b class="c">塑料</b><i class="l" style="width:10.23px;"><i style="transform:scaleX(0.682)">ABS</i></i></div>
<div class="t" style="left:165.3px;top:205.99px;"><b class="c">零件</b></div>
<div class="t" style="left:192.1px;top:205.99px;"><b class="c">塑料类</b></div>
<div class="t" style="left:224.2px;top:205.99px;"><b class="c">标准件</b></div>
<div class="t" style="left:262.8px;top:205.99px;"><b class="c">外协</b></div>
<div class="t" style="left:306px;top:205.99px;"><b class="c">条</b></div>
<div class="a" style="left:0px;top:216.9px;width:8.5px;height:11.05px;background:linear-gradient(#f0f1f8,#e2e4ef)"></div>
<div class="a" style="left:0px;top:227.95px;width:330px;height:1px;background:#dfe2f3"></div>
<div class="a" style="left:8.5px;top:216.9px;width:1px;height:12.05px;background:#dfe2f3"></div>
<div class="a" style="left:72.8px;top:216.9px;width:1px;height:12.05px;background:#dfe2f3"></div>
<div class="a" style="left:128.5px;top:216.9px;width:1px;height:12.05px;background:#dfe2f3"></div>
<div class="a" style="left:163px;top:216.9px;width:1px;height:12.05px;background:#dfe2f3"></div>
<div class="a" style="left:189.8px;top:216.9px;width:1px;height:12.05px;background:#dfe2f3"></div>
<div class="a" style="left:221.9px;top:216.9px;width:1px;height:12.05px;background:#dfe2f3"></div>
<div class="a" style="left:260.5px;top:216.9px;width:1px;height:12.05px;background:#dfe2f3"></div>
<div class="a" style="left:303.7px;top:216.9px;width:1px;height:12.05px;background:#dfe2f3"></div>
<div class="t" style="left:10.8px;top:218.04px;"><b class="c">下杉定位片（左）</b></div>
<div class="t" style="left:75.1px;top:218.04px;"><i class="l" style="width:47.74px;"><i style="transform:scaleX(0.853)">283-830301-00X</i></i></div>
<div class="t" style="left:130.8px;top:218.04px;"><b class="c">塑料</b><i class="l" style="width:10.23px;"><i style="transform:scaleX(0.682)">ABS</i></i></div>
<div class="t" style="left:165.3px;top:218.04px;"><b class="c">零件</b></div>
<div class="t" style="left:192.1px;top:218.04px;"><b class="c">塑料类</b></div>
<div class="t" style="left:224.2px;top:218.04px;"><b class="c">标准件</b></div>
<div class="t" style="left:262.8px;top:218.04px;"><b class="c">外协</b></div>
<div class="t" style="left:306px;top:218.04px;"><b class="c">条</b></div>
<div class="a" style="left:0px;top:228.95px;width:8.5px;height:11.05px;background:linear-gradient(#f0f1f8,#e2e4ef)"></div>
<div class="a" style="left:0px;top:240px;width:330px;height:1px;background:#dfe2f3"></div>
<div class="a" style="left:8.5px;top:228.95px;width:1px;height:12.05px;background:#dfe2f3"></div>
<div class="a" style="left:72.8px;top:228.95px;width:1px;height:12.05px;background:#dfe2f3"></div>
<div class="a" style="left:128.5px;top:228.95px;width:1px;height:12.05px;background:#dfe2f3"></div>
<div class="a" style="left:163px;top:228.95px;width:1px;height:12.05px;background:#dfe2f3"></div>
<div class="a" style="left:189.8px;top:228.95px;width:1px;height:12.05px;background:#dfe2f3"></div>
<div class="a" style="left:221.9px;top:228.95px;width:1px;height:12.05px;background:#dfe2f3"></div>
<div class="a" style="left:260.5px;top:228.95px;width:1px;height:12.05px;background:#dfe2f3"></div>
<div class="a" style="left:303.7px;top:228.95px;width:1px;height:12.05px;background:#dfe2f3"></div>
<div class="t" style="left:10.8px;top:230.09px;"><b class="c">下杉定位片（右）</b></div>
<div class="t" style="left:75.1px;top:230.09px;"><i class="l" style="width:47.74px;"><i style="transform:scaleX(0.853)">283-830302-00X</i></i></div>
<div class="t" style="left:130.8px;top:230.09px;"><b class="c">塑料</b><i class="l" style="width:10.23px;"><i style="transform:scaleX(0.682)">ABS</i></i></div>
<div class="t" style="left:165.3px;top:230.09px;"><b class="c">零件</b></div>
<div class="t" style="left:192.1px;top:230.09px;"><b class="c">塑料类</b></div>
<div class="t" style="left:224.2px;top:230.09px;"><b class="c">标准件</b></div>
<div class="t" style="left:262.8px;top:230.09px;"><b class="c">外协</b></div>
<div class="t" style="left:306px;top:230.09px;"><b class="c">条</b></div>
<div class="a" style="left:0px;top:241px;width:8.5px;height:11.05px;background:linear-gradient(#f0f1f8,#e2e4ef)"></div>
<div class="a" style="left:0px;top:252.05px;width:330px;height:1px;background:#dfe2f3"></div>
<div class="a" style="left:8.5px;top:241px;width:1px;height:12.05px;background:#dfe2f3"></div>
<div class="a" style="left:72.8px;top:241px;width:1px;height:12.05px;background:#dfe2f3"></div>
<div class="a" style="left:128.5px;top:241px;width:1px;height:12.05px;background:#dfe2f3"></div>
<div class="a" style="left:163px;top:241px;width:1px;height:12.05px;background:#dfe2f3"></div>
<div class="a" style="left:189.8px;top:241px;width:1px;height:12.05px;background:#dfe2f3"></div>
<div class="a" style="left:221.9px;top:241px;width:1px;height:12.05px;background:#dfe2f3"></div>
<div class="a" style="left:260.5px;top:241px;width:1px;height:12.05px;background:#dfe2f3"></div>
<div class="a" style="left:303.7px;top:241px;width:1px;height:12.05px;background:#dfe2f3"></div>
<div class="t" style="left:10.8px;top:242.14px;"><b class="c">压线片（四）</b></div>
<div class="t" style="left:75.1px;top:242.14px;"><i class="l" style="width:47.74px;"><i style="transform:scaleX(0.853)">283-830304-00X</i></i></div>
<div class="t" style="left:130.8px;top:242.14px;"><b class="c">塑料</b><i class="l" style="width:10.23px;"><i style="transform:scaleX(0.682)">ABS</i></i></div>
<div class="t" style="left:165.3px;top:242.14px;"><b class="c">零件</b></div>
<div class="t" style="left:192.1px;top:242.14px;"><b class="c">塑料类</b></div>
<div class="t" style="left:224.2px;top:242.14px;"><b class="c">标准件</b></div>
<div class="t" style="left:262.8px;top:242.14px;"><b class="c">外协</b></div>
<div class="t" style="left:306px;top:242.14px;"><b class="c">条</b></div>
<svg class="a" style="left:2.5px;top:3px" width="5" height="6" viewBox="0 0 5 6"><path d="M1 .8L3.5 3 1 5.2" stroke="#3050b8" stroke-width="1.2" fill="none"/></svg>
</div>
<div class="a" style="left:587px;top:115.5px;width:9.5px;height:259.5px;background:#f2f7fc"></div>
<div class="a" style="left:587px;top:117px;width:9.5px;height:8.5px;background:linear-gradient(90deg,#eaf3fc,#c9e0f6);border:1px solid #bad3ec;border-radius:1.5px"></div>
<svg class="a" style="left:588.3px;top:118.8px" width="7" height="5" viewBox="0 0 7 5"><path d="M1 4l2.5-2.5L6 4" stroke="#1c4ca0" stroke-width="1.4" fill="none"/></svg>
<div class="a" style="left:587px;top:126px;width:9.5px;height:36px;background:linear-gradient(90deg,#eaf3fc,#c9e0f6);border:1px solid #bad3ec;border-radius:1.5px"></div>
<div class="a" style="left:589.5px;top:142px;width:4px;height:1px;background:#7898c8"></div>
<div class="a" style="left:589.5px;top:144px;width:4px;height:1px;background:#7898c8"></div>
<div class="a" style="left:587px;top:366.5px;width:9.5px;height:8.5px;background:linear-gradient(90deg,#eaf3fc,#c9e0f6);border:1px solid #bad3ec;border-radius:1.5px"></div>
<svg class="a" style="left:588.3px;top:368.5px" width="7" height="5" viewBox="0 0 7 5"><path d="M1 1l2.5 2.5L6 1" stroke="#1c4ca0" stroke-width="1.4" fill="none"/></svg>
<div class="a" style="left:269.5px;top:375px;width:317.5px;height:9.5px;background:#f2f7fc"></div>
<div class="a" style="left:269.5px;top:375px;width:8.5px;height:9px;background:linear-gradient(#eaf3fc,#c9e0f6);border:1px solid #bad3ec;border-radius:1.5px"></div>
<svg class="a" style="left:271px;top:376px" width="5" height="7" viewBox="0 0 5 7"><path d="M4 1L1.5 3.5 4 6" stroke="#1c4ca0" stroke-width="1.4" fill="none"/></svg>
<div class="a" style="left:278px;top:375px;width:60px;height:9px;background:linear-gradient(#eaf3fc,#c9e0f6);border:1px solid #bad3ec;border-radius:1.5px"></div>
<div class="a" style="left:306px;top:377.5px;width:1px;height:4px;background:#7898c8"></div>
<div class="a" style="left:308px;top:377.5px;width:1px;height:4px;background:#7898c8"></div>
<div class="a" style="left:578.5px;top:375px;width:8.5px;height:9px;background:linear-gradient(#eaf3fc,#c9e0f6);border:1px solid #bad3ec;border-radius:1.5px"></div>
<svg class="a" style="left:580.5px;top:376px" width="5" height="7" viewBox="0 0 5 7"><path d="M1 1l2.5 2.5L1 6" stroke="#1c4ca0" stroke-width="1.4" fill="none"/></svg>
<div class="a" style="left:587px;top:375px;width:9.5px;height:9.5px;background:#fafbfe"></div>
<div class="a" style="left:54.5px;top:396px;width:34px;height:11.5px;background:linear-gradient(#fbfbfe,#eceef6);border:1px solid #b6bedd;border-bottom:none;border-radius:3px 3px 0 0"></div>
<div class="t" style="left:57px;top:397.64px;font-weight:bold"><b class="c">消息管理</b></div>
<div class="a" style="left:52px;top:407.5px;width:556px;height:14.5px;background:linear-gradient(#f2f3f8,#e8eaf2)"></div>
<div class="a" style="left:52px;top:407px;width:556px;height:1px;background:#d2d6e8"></div>
<div class="a" style="left:53.5px;top:408.5px;width:59px;height:12px;background:#f5f5fa;border:1px solid #d6daea"></div>
<div class="t" style="left:56.2px;top:410.24px;"><i class="l" style="width:13.64px;"><i style="transform:scaleX(0.568)">XXXX</i></i><b class="c">技术有限公司</b></div>
<div class="a" style="left:114.5px;top:408.5px;width:259.5px;height:12px;background:#f5f5fa;border:1px solid #d6daea"></div>
<div class="t" style="left:118.2px;top:410.24px;"><b class="c">当前操作</b><i class="l" style="width:3.41px;"><i style="transform:scaleX(1.705)">:</i></i><b class="c">产品库</b></div>
<svg class="a" style="left:378px;top:410px" width="8" height="9" viewBox="0 0 8 9"><rect x="0" y="0" width="2.5" height="2.5" fill="#e03030"/><rect x="2.8" y="0" width="2.5" height="2.5" fill="#30a030"/><rect x="5.5" y="0" width="2.5" height="2.5" fill="#f0c020"/><rect x="0" y="3" width="2.5" height="2.5" fill="#3050e0"/><rect x="2.8" y="3" width="2.5" height="2.5" fill="#e060c0"/><rect x="5.5" y="3" width="2.5" height="2.5" fill="#30c0e0"/><rect x="0" y="6" width="8" height="2.5" fill="#e040e0"/></svg>
<div class="t" style="left:388.5px;top:410.24px;"><b class="c">界面样式</b></div>
<svg class="a" style="left:419px;top:413px" width="4" height="3" viewBox="0 0 4 3"><path d="M0 0h4L2 2.5z" fill="#222"/></svg>
<div class="a" style="left:424.5px;top:408.5px;width:173.5px;height:12px;background:#f5f5fa;border:1px solid #d6daea"></div>
<div class="t" style="left:427.5px;top:410.24px;"><i class="l" style="width:3.41px;"><i style="transform:scaleX(1.137)">[</i></i><b class="c">系统管理员</b><i class="l" style="width:40.92px;"><i style="transform:scaleX(1.023)">][17:10:09][</i></i><b class="c">培训数据库</b><i class="l" style="width:51.15px;"><i style="transform:scaleX(0.965)">][lucky][11000]</i></i></div>
<svg class="a" style="left:599px;top:413px" width="8" height="8" viewBox="0 0 8 8"><path d="M7.5 1.5l-6 6M7.5 4.5l-3 3" stroke="#8c94c8" stroke-width="1"/></svg>
<script>(function(){try{var s=document.createElement('span');s.style.cssText='position:absolute;left:0;top:0;font-family:"Liberation Sans",sans-serif;font-size:100px;line-height:1;white-space:nowrap;visibility:hidden';s.textContent='一一';document.body.appendChild(s);var w=s.getBoundingClientRect().width;document.body.removeChild(s);if(w>170){document.body.className+=' cjk';}}catch(e){}})();</script>
</body></html>
